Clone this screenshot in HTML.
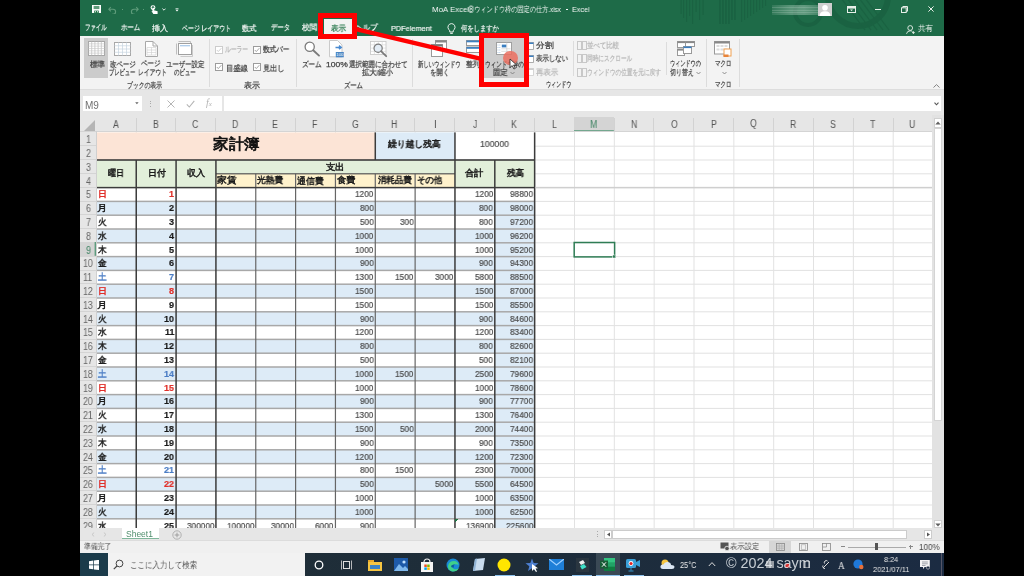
<!DOCTYPE html><html><head><meta charset="utf-8"><style>
html,body{margin:0;padding:0;background:#000;width:1024px;height:576px;overflow:hidden}
body{position:relative;font-family:"Liberation Sans",sans-serif}
div{position:absolute;box-sizing:border-box}
.t{white-space:nowrap;will-change:transform}
</style></head><body>
<div style="left:80.00px;top:0.00px;width:864.00px;height:553.00px;background:#e6e6e6"></div>
<div style="left:80.00px;top:0.00px;width:864.00px;height:36.40px;background:#1e6b48"></div>
<svg style="position:absolute;left:670px;top:0px" width="274" height="36" viewBox="0 0 274 36"><g opacity="0.8"><rect x="10.5" y="0" width="1.1" height="14" fill="#1a6141"/><rect x="13.0" y="0" width="1.1" height="18" fill="#1a6141"/><rect x="16.0" y="0" width="1.1" height="22" fill="#1a6141"/><rect x="19.0" y="0" width="1.1" height="16" fill="#1a6141"/><rect x="22.0" y="0" width="1.1" height="24" fill="#1a6141"/><rect x="25.5" y="0" width="1.1" height="12" fill="#1a6141"/><rect x="29.0" y="0" width="1.1" height="20" fill="#1a6141"/><rect x="32.5" y="0" width="1.1" height="15" fill="#1a6141"/><rect x="49.0" y="0" width="1.8" height="24" fill="#1a6141"/><rect x="52.0" y="0" width="1.8" height="24" fill="#1a6141"/><rect x="55.0" y="0" width="1.8" height="24" fill="#1a6141"/><rect x="58.0" y="0" width="1.8" height="24" fill="#1a6141"/><rect x="61.0" y="0" width="1.8" height="20" fill="#1a6141"/><rect x="64.0" y="0" width="1.8" height="20" fill="#1a6141"/><rect x="71.0" y="0" width="1.1" height="22" fill="#1a6141"/><rect x="74.0" y="0" width="1.1" height="20" fill="#1a6141"/><rect x="77.0" y="0" width="1.1" height="18" fill="#1a6141"/><rect x="80.0" y="0" width="1.1" height="16" fill="#1a6141"/><rect x="83.0" y="0" width="1.1" height="14" fill="#1a6141"/><rect x="86.0" y="0" width="1.1" height="12" fill="#1a6141"/><rect x="89.0" y="0" width="1.1" height="10" fill="#1a6141"/><rect x="92.0" y="0" width="1.1" height="8" fill="#1a6141"/><rect x="95.0" y="0" width="1.1" height="6" fill="#1a6141"/><circle cx="138" cy="12" r="13" fill="none" stroke="#1a6141" stroke-width="4"/><circle cx="188" cy="-4" r="30" fill="none" stroke="#1a6141" stroke-width="6"/><path d="M165 -10 L195 30" stroke="#1a6141" stroke-width="1.2"/><path d="M171 -10 L201 30" stroke="#1a6141" stroke-width="1.2"/><path d="M177 -10 L207 30" stroke="#1a6141" stroke-width="1.2"/><path d="M183 -10 L213 30" stroke="#1a6141" stroke-width="1.2"/><path d="M189 -10 L219 30" stroke="#1a6141" stroke-width="1.2"/></g></svg>
<svg style="position:absolute;left:91.50px;top:5.20px;" width="9" height="8.2" viewBox="0 0 9 8.2"><rect x="0" y="0" width="9" height="8.2" fill="#fff"/><rect x="1.6" y="0.9" width="5.8" height="3.2" fill="#5f9c7b"/><rect x="2.2" y="5.6" width="4.6" height="2.6" fill="#217346"/><rect x="3" y="6.3" width="1" height="1" fill="#fff"/><rect x="5" y="6.3" width="1" height="1" fill="#fff"/></svg>
<svg style="position:absolute;left:108.00px;top:5.50px;" width="9" height="8" viewBox="0 0 9 8"><path d="M2.8 1 L0.8 3.2 L2.8 5.4 M1.2 3.2 H5 A2.6 2.6 0 0 1 5 8.4 H4" fill="none" stroke="#5f9c7b" stroke-width="1.1"/></svg>
<svg style="position:absolute;left:129.80px;top:5.50px;" width="9" height="8" viewBox="0 0 9 8"><path d="M6.2 1 L8.2 3.2 L6.2 5.4 M7.8 3.2 H4 A2.6 2.6 0 0 0 4 8.4 H5" fill="none" stroke="#5f9c7b" stroke-width="1.1"/></svg>
<div style="left:121.50px;top:9.30px;width:1.20px;height:0.90px;background:#5f9c7b"></div>
<div style="left:143.20px;top:9.30px;width:1.20px;height:0.90px;background:#5f9c7b"></div>
<svg style="position:absolute;left:150.30px;top:4.80px;" width="8" height="9.5" viewBox="0 0 8 9.5"><circle cx="3" cy="2.6" r="1.9" fill="none" stroke="#fff" stroke-width="1.1"/><path d="M2.4 2.8 V6.2 L1.4 6 L3.6 9.4 H7.6 V6.3 L4 5.2 V2.8Z" fill="#fff"/></svg>
<svg style="position:absolute;left:162.30px;top:8.20px;" width="4" height="3" viewBox="0 0 4 3"><path d="M0.4 0.6 L2 2.2 L3.6 0.6" fill="none" stroke="#fff" stroke-width="0.9"/></svg>
<svg style="position:absolute;left:175.00px;top:7.80px;" width="4" height="4" viewBox="0 0 4 4"><rect x="0.5" y="0.4" width="3" height="0.8" fill="#fff"/><path d="M0.5 1.8 L2 3.6 L3.5 1.8Z" fill="#fff"/></svg>
<div class="t" style="left:431.71px;top:4.30px;font-size:8px;line-height:11px;color:#f4f7f5;font-weight:normal;font-family:'Liberation Sans',sans-serif;transform-origin:0 0;transform:scaleX(0.9853);">MoA Excel</div>
<div class="t" style="left:467.83px;top:4.30px;font-size:8px;line-height:11px;color:#f4f7f5;font-weight:normal;font-family:'Liberation Sans',sans-serif;transform-origin:0 0;transform:scaleX(0.7723);">⑧ウィンドウ枠の固定の仕方.xlsx</div>
<div style="left:566.00px;top:9.20px;width:2.40px;height:0.80px;background:#f4f7f5"></div>
<div class="t" style="left:572.39px;top:4.30px;font-size:8px;line-height:11px;color:#f4f7f5;font-weight:normal;font-family:'Liberation Sans',sans-serif;transform-origin:0 0;transform:scaleX(0.9111);">Excel</div>
<div style="left:772px;top:5px;width:46px;height:9.5px;background:linear-gradient(90deg,rgba(190,215,200,.12),rgba(200,225,210,.35) 40%,rgba(200,225,210,.4) 70%,rgba(190,215,200,.25));"></div>
<div style="left:772.00px;top:7.00px;width:46.00px;height:0.90px;background:rgba(230,240,235,.18)"></div>
<div style="left:772.00px;top:9.50px;width:46.00px;height:0.90px;background:rgba(230,240,235,.18)"></div>
<div style="left:772.00px;top:12.00px;width:46.00px;height:0.90px;background:rgba(230,240,235,.18)"></div>
<div style="left:818.00px;top:2.50px;width:13.50px;height:13.00px;background:#cfcfcf"></div>
<svg style="position:absolute;left:818.00px;top:2.50px;" width="14" height="13" viewBox="0 0 14 13"><circle cx="7" cy="4.8" r="2.8" fill="#fff"/><path d="M1.5 13 Q1.5 8.2 7 8.2 Q12.5 8.2 12.5 13Z" fill="#fff"/></svg>
<svg style="position:absolute;left:846.50px;top:5.60px;" width="9" height="7" viewBox="0 0 9 7"><rect x="0.5" y="0.5" width="8" height="6" fill="none" stroke="#e8efe9" stroke-width="1"/><rect x="1" y="1" width="7" height="1.6" fill="#e8efe9"/><path d="M3 3.6 L4.5 5.2 L6 3.6Z" fill="#e8efe9"/></svg>
<div style="left:875.00px;top:8.80px;width:6.00px;height:1.00px;background:#e8efe9"></div>
<svg style="position:absolute;left:900.80px;top:5.80px;" width="7" height="7" viewBox="0 0 7 7"><rect x="0.5" y="1.8" width="4.7" height="4.7" fill="none" stroke="#e8efe9" stroke-width="1"/><path d="M1.8 1.8 V0.5 H6.5 V5.2 H5.2" fill="none" stroke="#e8efe9" stroke-width="1"/></svg>
<svg style="position:absolute;left:927.60px;top:6.40px;" width="6" height="6" viewBox="0 0 6 6"><path d="M0.4 0.4 L5.6 5.6 M5.6 0.4 L0.4 5.6" stroke="#e8efe9" stroke-width="1"/></svg>
<div style="left:323.75px;top:19.40px;width:28.20px;height:17.10px;background:#f3f3f3"></div>
<div class="t" style="left:84.97px;top:22.30px;font-size:8px;line-height:11px;color:#f4f7f5;font-weight:normal;font-family:'Liberation Sans',sans-serif;transform-origin:0 0;transform:scaleX(0.6759);-webkit-text-stroke:0.2px #f4f7f5;">ファイル</div>
<div class="t" style="left:120.60px;top:22.30px;font-size:8px;line-height:11px;color:#f4f7f5;font-weight:normal;font-family:'Liberation Sans',sans-serif;transform-origin:0 0;transform:scaleX(0.8000);-webkit-text-stroke:0.2px #f4f7f5;">ホーム</div>
<div class="t" style="left:152.39px;top:22.80px;font-size:8px;line-height:11px;color:#f4f7f5;font-weight:normal;font-family:'Liberation Sans',sans-serif;transform-origin:0 0;transform:scaleX(1.0071);-webkit-text-stroke:0.2px #f4f7f5;">挿入</div>
<div class="t" style="left:181.56px;top:22.80px;font-size:8px;line-height:11px;color:#f4f7f5;font-weight:normal;font-family:'Liberation Sans',sans-serif;transform-origin:0 0;transform:scaleX(0.7443);-webkit-text-stroke:0.2px #f4f7f5;">ページ レイアウト</div>
<div class="t" style="left:241.90px;top:22.80px;font-size:8px;line-height:11px;color:#f4f7f5;font-weight:normal;font-family:'Liberation Sans',sans-serif;transform-origin:0 0;transform:scaleX(0.9000);-webkit-text-stroke:0.2px #f4f7f5;">数式</div>
<div class="t" style="left:270.60px;top:22.30px;font-size:8px;line-height:11px;color:#f4f7f5;font-weight:normal;font-family:'Liberation Sans',sans-serif;transform-origin:0 0;transform:scaleX(0.7952);-webkit-text-stroke:0.2px #f4f7f5;">データ</div>
<div class="t" style="left:301.75px;top:22.30px;font-size:8px;line-height:11px;color:#f4f7f5;font-weight:normal;font-family:'Liberation Sans',sans-serif;transform-origin:0 0;transform:scaleX(0.9500);-webkit-text-stroke:0.2px #f4f7f5;">校閲</div>
<div class="t" style="left:355.10px;top:22.30px;font-size:8px;line-height:11px;color:#f4f7f5;font-weight:normal;font-family:'Liberation Sans',sans-serif;transform-origin:0 0;transform:scaleX(0.9476);-webkit-text-stroke:0.2px #f4f7f5;">ヘルプ</div>
<div class="t" style="left:390.78px;top:22.80px;font-size:8px;line-height:11px;color:#f4f7f5;font-weight:normal;font-family:'Liberation Sans',sans-serif;transform-origin:0 0;transform:scaleX(0.9163);-webkit-text-stroke:0.2px #f4f7f5;">PDFelement</div>
<div class="t" style="left:461.21px;top:22.80px;font-size:8px;line-height:11px;color:#f4f7f5;font-weight:normal;font-family:'Liberation Sans',sans-serif;transform-origin:0 0;transform:scaleX(0.7886);-webkit-text-stroke:0.2px #f4f7f5;">何をしますか</div>
<div class="t" style="left:330.66px;top:22.80px;font-size:8px;line-height:11px;color:#217346;font-weight:normal;font-family:'Liberation Sans',sans-serif;transform-origin:0 0;transform:scaleX(0.9429);-webkit-text-stroke:0.2px #217346;">表示</div>
<svg style="position:absolute;left:447.00px;top:22.50px;" width="9" height="11" viewBox="0 0 9 11"><path d="M4.5 0.6 A3.6 3.6 0 0 1 7.2 6.5 L6.2 7.8 V9 H2.8 V7.8 L1.8 6.5 A3.6 3.6 0 0 1 4.5 0.6Z M3.2 10.4 H5.8" fill="none" stroke="#fff" stroke-width="0.9"/></svg>
<svg style="position:absolute;left:906.30px;top:25.00px;" width="9" height="9" viewBox="0 0 9 9"><circle cx="4.2" cy="3" r="2.4" fill="none" stroke="#e8efe9" stroke-width="0.9"/><path d="M0.5 8.8 Q1.2 5.8 4.2 5.8 Q5.6 5.8 6.4 6.5 M6 7.6 H8.8 M7.4 6.2 V9" fill="none" stroke="#e8efe9" stroke-width="0.9"/></svg>
<div class="t" style="left:918.07px;top:22.80px;font-size:8px;line-height:11px;color:#f4f7f5;font-weight:normal;font-family:'Liberation Sans',sans-serif;transform-origin:0 0;transform:scaleX(0.9286);">共有</div>
<div style="left:80.00px;top:36.40px;width:864.00px;height:52.80px;background:#f3f3f3"></div>
<div style="left:80.00px;top:88.80px;width:864.00px;height:1.00px;background:#dddddd"></div>
<div style="left:208.70px;top:39.00px;width:1.00px;height:48.00px;background:#dcdcdc"></div>
<div style="left:296.00px;top:39.00px;width:1.00px;height:48.00px;background:#dcdcdc"></div>
<div style="left:411.50px;top:39.00px;width:1.00px;height:48.00px;background:#dcdcdc"></div>
<div style="left:705.90px;top:39.00px;width:1.00px;height:48.00px;background:#dcdcdc"></div>
<div style="left:738.80px;top:39.00px;width:1.00px;height:48.00px;background:#dcdcdc"></div>
<div style="left:572.50px;top:41.00px;width:1.00px;height:35.00px;background:#dcdcdc"></div>
<div style="left:666.10px;top:42.00px;width:1.00px;height:33.00px;background:#dcdcdc"></div>
<div class="t" style="left:126.87px;top:79.50px;font-size:7.6px;line-height:11px;color:#444444;font-weight:normal;font-family:'Liberation Sans',sans-serif;transform-origin:0 0;transform:scaleX(0.7304);-webkit-text-stroke:0.25px #444444;">ブックの表示</div>
<div class="t" style="left:244.31px;top:79.50px;font-size:7.6px;line-height:11px;color:#444444;font-weight:normal;font-family:'Liberation Sans',sans-serif;transform-origin:0 0;transform:scaleX(0.9929);-webkit-text-stroke:0.25px #444444;">表示</div>
<div class="t" style="left:344.23px;top:79.50px;font-size:7.6px;line-height:11px;color:#444444;font-weight:normal;font-family:'Liberation Sans',sans-serif;transform-origin:0 0;transform:scaleX(0.7857);-webkit-text-stroke:0.25px #444444;">ズーム</div>
<div class="t" style="left:546.37px;top:79.00px;font-size:7.6px;line-height:11px;color:#444444;font-weight:normal;font-family:'Liberation Sans',sans-serif;transform-origin:0 0;transform:scaleX(0.6316);-webkit-text-stroke:0.25px #444444;">ウィンドウ</div>
<div class="t" style="left:714.82px;top:79.00px;font-size:7.6px;line-height:11px;color:#444444;font-weight:normal;font-family:'Liberation Sans',sans-serif;transform-origin:0 0;transform:scaleX(0.6818);-webkit-text-stroke:0.25px #444444;">マクロ</div>
<div style="left:84.40px;top:38.30px;width:23.50px;height:39.60px;background:#cccccc"></div>
<svg style="position:absolute;left:88.00px;top:41.40px;" width="17" height="15" viewBox="0 0 17 15"><rect x="0.5" y="0.5" width="16" height="14" fill="#fff" stroke="#a8a8a8"/><line x1="3.70" y1="0.5" x2="3.70" y2="14.5" stroke="#b8b8b8" stroke-width="0.7"/><line x1="6.90" y1="0.5" x2="6.90" y2="14.5" stroke="#b8b8b8" stroke-width="0.7"/><line x1="10.10" y1="0.5" x2="10.10" y2="14.5" stroke="#b8b8b8" stroke-width="0.7"/><line x1="13.30" y1="0.5" x2="13.30" y2="14.5" stroke="#b8b8b8" stroke-width="0.7"/><line x1="0.5" y1="2.83" x2="16.5" y2="2.83" stroke="#c8c8c8" stroke-width="0.6"/><line x1="0.5" y1="5.17" x2="16.5" y2="5.17" stroke="#c8c8c8" stroke-width="0.6"/><line x1="0.5" y1="7.50" x2="16.5" y2="7.50" stroke="#c8c8c8" stroke-width="0.6"/><line x1="0.5" y1="9.83" x2="16.5" y2="9.83" stroke="#c8c8c8" stroke-width="0.6"/><line x1="0.5" y1="12.17" x2="16.5" y2="12.17" stroke="#c8c8c8" stroke-width="0.6"/></svg>
<div class="t" style="left:89.50px;top:58.50px;font-size:7.6px;line-height:11px;color:#444444;font-weight:normal;font-family:'Liberation Sans',sans-serif;transform-origin:0 0;transform:scaleX(0.9333);-webkit-text-stroke:0.25px #444444;">標準</div>
<svg style="position:absolute;left:114.00px;top:42.00px;" width="17" height="14" viewBox="0 0 17 14"><rect x="0.5" y="0.5" width="16" height="13" fill="#fff" stroke="#a8a8a8"/><line x1="4.5" y1="0.5" x2="4.5" y2="13.5" stroke="#c6d4e0" stroke-width="0.7"/><line x1="8.5" y1="0.5" x2="8.5" y2="13.5" stroke="#c6d4e0" stroke-width="0.7"/><line x1="12.5" y1="0.5" x2="12.5" y2="13.5" stroke="#c6d4e0" stroke-width="0.7"/><line x1="0.5" y1="3.75" x2="16.5" y2="3.75" stroke="#c6d4e0" stroke-width="0.7"/><line x1="0.5" y1="7.0" x2="16.5" y2="7.0" stroke="#c6d4e0" stroke-width="0.7"/><line x1="0.5" y1="10.25" x2="16.5" y2="10.25" stroke="#c6d4e0" stroke-width="0.7"/></svg>
<div class="t" style="left:109.70px;top:58.50px;font-size:7.6px;line-height:11px;color:#444444;font-weight:normal;font-family:'Liberation Sans',sans-serif;transform-origin:0 0;transform:scaleX(0.8033);-webkit-text-stroke:0.25px #444444;">改ページ</div>
<div class="t" style="left:109.14px;top:66.70px;font-size:7.6px;line-height:11px;color:#444444;font-weight:normal;font-family:'Liberation Sans',sans-serif;transform-origin:0 0;transform:scaleX(0.6579);-webkit-text-stroke:0.25px #444444;">プレビュー</div>
<svg style="position:absolute;left:144.60px;top:40.80px;" width="13" height="16" viewBox="0 0 13 16"><path d="M0.5 0.5 H8 L12.5 5 V15.5 H0.5Z" fill="#fff" stroke="#a8a8a8"/><path d="M8 0.5 V5 H12.5" fill="none" stroke="#a8a8a8"/><path d="M2 6.5 H11 V14 H2Z M6.5 6.5 V14 M2 9 H11 M2 11.5 H11" fill="none" stroke="#cfcfcf" stroke-width="0.6"/></svg>
<div class="t" style="left:141.39px;top:58.00px;font-size:7.6px;line-height:11px;color:#444444;font-weight:normal;font-family:'Liberation Sans',sans-serif;transform-origin:0 0;transform:scaleX(0.8091);-webkit-text-stroke:0.25px #444444;">ページ</div>
<div class="t" style="left:137.87px;top:67.20px;font-size:7.6px;line-height:11px;color:#444444;font-weight:normal;font-family:'Liberation Sans',sans-serif;transform-origin:0 0;transform:scaleX(0.7257);-webkit-text-stroke:0.25px #444444;">レイアウト</div>
<svg style="position:absolute;left:176.30px;top:41.40px;" width="17" height="16" viewBox="0 0 17 16"><path d="M2.5 0.5 H14.5 M0.5 2.5 V13.5 M14.5 0.5 V2" fill="none" stroke="#b0b0b0" stroke-width="0.8"/><rect x="2.5" y="2.5" width="13" height="11" fill="#fff" stroke="#a0a0a0"/><path d="M4.5 15.5 H16.5 V4" fill="none" stroke="#b8b8b8" stroke-width="0.7"/><rect x="4" y="4.2" width="10" height="1.1" fill="#9fc3e6"/></svg>
<div class="t" style="left:165.50px;top:58.50px;font-size:7.6px;line-height:11px;color:#444444;font-weight:normal;font-family:'Liberation Sans',sans-serif;transform-origin:0 0;transform:scaleX(0.8000);-webkit-text-stroke:0.25px #444444;">ユーザー設定</div>
<div class="t" style="left:173.92px;top:66.70px;font-size:7.6px;line-height:11px;color:#444444;font-weight:normal;font-family:'Liberation Sans',sans-serif;transform-origin:0 0;transform:scaleX(0.6767);-webkit-text-stroke:0.25px #444444;">のビュー</div>
<svg style="position:absolute;left:215.30px;top:45.50px;" width="8" height="8" viewBox="0 0 8 8"><rect x="0.5" y="0.5" width="7" height="7" fill="#fff" stroke="#cccccc"/><path d="M1.8 4 L3.3 5.6 L6.3 2.2" fill="none" stroke="#cccccc" stroke-width="0.9"/></svg>
<div class="t" style="left:225.38px;top:44.20px;font-size:7.6px;line-height:11px;color:#b8b8b8;font-weight:normal;font-family:'Liberation Sans',sans-serif;transform-origin:0 0;transform:scaleX(0.7200);-webkit-text-stroke:0.25px #b8b8b8;">ルーラー</div>
<svg style="position:absolute;left:252.80px;top:45.50px;" width="8" height="8" viewBox="0 0 8 8"><rect x="0.5" y="0.5" width="7" height="7" fill="#fff" stroke="#9c9c9c"/><path d="M1.8 4 L3.3 5.6 L6.3 2.2" fill="none" stroke="#9c9c9c" stroke-width="0.9"/></svg>
<div class="t" style="left:262.78px;top:44.20px;font-size:7.6px;line-height:11px;color:#444444;font-weight:normal;font-family:'Liberation Sans',sans-serif;transform-origin:0 0;transform:scaleX(0.8233);-webkit-text-stroke:0.25px #444444;">数式バー</div>
<svg style="position:absolute;left:215.30px;top:63.30px;" width="8" height="8" viewBox="0 0 8 8"><rect x="0.5" y="0.5" width="7" height="7" fill="#fff" stroke="#9c9c9c"/><path d="M1.8 4 L3.3 5.6 L6.3 2.2" fill="none" stroke="#9c9c9c" stroke-width="0.9"/></svg>
<div class="t" style="left:225.69px;top:62.50px;font-size:7.6px;line-height:11px;color:#444444;font-weight:normal;font-family:'Liberation Sans',sans-serif;transform-origin:0 0;transform:scaleX(0.9136);-webkit-text-stroke:0.25px #444444;">目盛線</div>
<svg style="position:absolute;left:252.80px;top:63.30px;" width="8" height="8" viewBox="0 0 8 8"><rect x="0.5" y="0.5" width="7" height="7" fill="#fff" stroke="#9c9c9c"/><path d="M1.8 4 L3.3 5.6 L6.3 2.2" fill="none" stroke="#9c9c9c" stroke-width="0.9"/></svg>
<div class="t" style="left:262.70px;top:62.50px;font-size:7.6px;line-height:11px;color:#444444;font-weight:normal;font-family:'Liberation Sans',sans-serif;transform-origin:0 0;transform:scaleX(0.8952);-webkit-text-stroke:0.25px #444444;">見出し</div>
<svg style="position:absolute;left:304.00px;top:41.00px;" width="17" height="17" viewBox="0 0 17 17"><circle cx="5.7" cy="5.8" r="4.6" fill="#fff" stroke="#7a7a7a" stroke-width="1.3"/><path d="M9.2 9.3 L15 14.6" stroke="#7a7a7a" stroke-width="1.9" stroke-linecap="round"/></svg>
<div class="t" style="left:302.27px;top:58.50px;font-size:7.6px;line-height:11px;color:#444444;font-weight:normal;font-family:'Liberation Sans',sans-serif;transform-origin:0 0;transform:scaleX(0.8143);-webkit-text-stroke:0.25px #444444;">ズーム</div>
<svg style="position:absolute;left:329.30px;top:40.20px;" width="16" height="18" viewBox="0 0 16 18"><path d="M0.5 0.5 H8.5 L13 5 V16.8 H0.5Z" fill="#fff" stroke="#c4c4c4" stroke-width="0.9"/><path d="M6.5 7.4 H11.5 M10 5.6 L12.2 7.4 L10 9.2" fill="none" stroke="#4a8ad0" stroke-width="1.5"/><rect x="6.8" y="12" width="8" height="5.3" fill="#4a86c4"/><text x="10.8" y="16.3" font-size="4.2" fill="#fff" text-anchor="middle" font-family="Liberation Sans">100</text></svg>
<div class="t" style="left:325.58px;top:58.50px;font-size:7.6px;line-height:11px;color:#444444;font-weight:normal;font-family:'Liberation Sans',sans-serif;transform-origin:0 0;transform:scaleX(1.1235);-webkit-text-stroke:0.25px #444444;">100%</div>
<svg style="position:absolute;left:369.80px;top:41.00px;" width="18" height="17" viewBox="0 0 18 17"><rect x="0.5" y="0.5" width="15.5" height="13" fill="#fff" stroke="#c4c4c4" stroke-width="0.8"/><line x1="4.4" y1="0.5" x2="4.4" y2="13.5" stroke="#d4d4d4" stroke-width="0.6"/><line x1="8.3" y1="0.5" x2="8.3" y2="13.5" stroke="#d4d4d4" stroke-width="0.6"/><line x1="12.2" y1="0.5" x2="12.2" y2="13.5" stroke="#d4d4d4" stroke-width="0.6"/><line x1="0.5" y1="3.8" x2="16" y2="3.8" stroke="#d4d4d4" stroke-width="0.6"/><line x1="0.5" y1="7.1" x2="16" y2="7.1" stroke="#d4d4d4" stroke-width="0.6"/><line x1="0.5" y1="10.4" x2="16" y2="10.4" stroke="#d4d4d4" stroke-width="0.6"/><circle cx="8.1" cy="7.2" r="4.1" fill="#e3ecf5" stroke="#7a7a7a" stroke-width="1.2"/><path d="M11 10.2 L16.2 15.2" stroke="#7a7a7a" stroke-width="1.8" stroke-linecap="round"/></svg>
<div class="t" style="left:348.99px;top:59.00px;font-size:7.6px;line-height:11px;color:#444444;font-weight:normal;font-family:'Liberation Sans',sans-serif;transform-origin:0 0;transform:scaleX(0.8145);-webkit-text-stroke:0.25px #444444;">選択範囲に合わせて</div>
<div class="t" style="left:361.99px;top:67.20px;font-size:7.6px;line-height:11px;color:#444444;font-weight:normal;font-family:'Liberation Sans',sans-serif;transform-origin:0 0;transform:scaleX(0.9121);-webkit-text-stroke:0.25px #444444;">拡大/縮小</div>
<svg style="position:absolute;left:430.50px;top:40.40px;" width="16" height="17" viewBox="0 0 16 17"><rect x="4.5" y="0.5" width="11" height="10" fill="#fff" stroke="#999"/><rect x="4.5" y="0.5" width="11" height="2" fill="#888"/><rect x="0.5" y="4.5" width="11" height="12" fill="#fff" stroke="#999"/><rect x="0.5" y="4.5" width="11" height="2" fill="#777"/></svg>
<div class="t" style="left:417.83px;top:58.50px;font-size:7.6px;line-height:11px;color:#444444;font-weight:normal;font-family:'Liberation Sans',sans-serif;transform-origin:0 0;transform:scaleX(0.6661);-webkit-text-stroke:0.25px #444444;">新しいウィンドウ</div>
<div class="t" style="left:429.58px;top:67.20px;font-size:7.6px;line-height:11px;color:#444444;font-weight:normal;font-family:'Liberation Sans',sans-serif;transform-origin:0 0;transform:scaleX(0.8105);-webkit-text-stroke:0.25px #444444;">を開く</div>
<svg style="position:absolute;left:466.40px;top:40.40px;" width="14" height="13" viewBox="0 0 14 13"><rect x="0.5" y="0.5" width="13" height="5" fill="#fff" stroke="#999"/><rect x="0.5" y="0.5" width="13" height="1.8" fill="#3c7fc0"/><rect x="0.5" y="7" width="13" height="5.5" fill="#fff" stroke="#999"/><rect x="0.5" y="7" width="13" height="1.8" fill="#3c7fc0"/></svg>
<div class="t" style="left:465.54px;top:58.50px;font-size:7.6px;line-height:11px;color:#444444;font-weight:normal;font-family:'Liberation Sans',sans-serif;transform-origin:0 0;transform:scaleX(0.8643);-webkit-text-stroke:0.25px #444444;">整列</div>
<div style="left:484.00px;top:37.50px;width:40.00px;height:40.30px;background:#cccccc"></div>
<svg style="position:absolute;left:496.40px;top:41.90px;" width="16" height="13" viewBox="0 0 16 13"><rect x="0.5" y="0.5" width="15" height="12" fill="#fff" stroke="#a0a0a0"/><rect x="5.8" y="2.6" width="4.6" height="2.8" fill="#3c7fc0"/><path d="M1.5 3 H4.5 M1.5 5.5 H4.5 M1.5 8 H4.5 M1.5 10.5 H4.5" stroke="#9fbfdf" stroke-width="0.8" stroke-dasharray="1 0.8"/><path d="M5.3 6.8 H14.5 M5.3 9.3 H14.5 M10.8 0.5 V12.5" stroke="#c8c8c8" stroke-width="0.6"/></svg>
<div class="t" style="left:484.71px;top:58.50px;font-size:7.6px;line-height:11px;color:#444444;font-weight:normal;font-family:'Liberation Sans',sans-serif;transform-origin:0 0;transform:scaleX(0.6926);-webkit-text-stroke:0.25px #444444;">ウィンドウ枠の</div>
<div class="t" style="left:493.29px;top:67.20px;font-size:7.6px;line-height:11px;color:#444444;font-weight:normal;font-family:'Liberation Sans',sans-serif;transform-origin:0 0;transform:scaleX(0.9143);-webkit-text-stroke:0.25px #444444;">固定</div>
<svg style="position:absolute;left:510.00px;top:71.00px;" width="5" height="4" viewBox="0 0 5 4"><path d="M0.5 1 L2.5 3 L4.5 1" fill="none" stroke="#777" stroke-width="0.8"/></svg>
<svg style="position:absolute;left:527.00px;top:41.60px;" width="7" height="8" viewBox="0 0 7 8"><rect x="0.5" y="0.5" width="6" height="7" fill="#fff" stroke="#999" stroke-width="0.8"/><rect x="0.5" y="0.5" width="6" height="1.5" fill="#3c7fc0"/></svg>
<div class="t" style="left:535.60px;top:40.10px;font-size:7.6px;line-height:11px;color:#444444;font-weight:normal;font-family:'Liberation Sans',sans-serif;transform-origin:0 0;transform:scaleX(1.1000);-webkit-text-stroke:0.25px #444444;">分割</div>
<svg style="position:absolute;left:527.00px;top:54.80px;" width="7" height="8" viewBox="0 0 7 8"><rect x="0.5" y="0.5" width="6" height="7" fill="#fff" stroke="#999" stroke-width="0.8"/><rect x="0.5" y="0.5" width="6" height="1.5" fill="#3c7fc0"/></svg>
<div class="t" style="left:535.90px;top:53.20px;font-size:7.6px;line-height:11px;color:#444444;font-weight:normal;font-family:'Liberation Sans',sans-serif;transform-origin:0 0;transform:scaleX(0.8026);-webkit-text-stroke:0.25px #444444;">表示しない</div>
<svg style="position:absolute;left:527.00px;top:68.00px;" width="7" height="8" viewBox="0 0 7 8"><rect x="0.5" y="0.5" width="6" height="7" fill="#fff" stroke="#cccccc" stroke-width="0.8"/><rect x="0.5" y="0.5" width="6" height="1.5" fill="#ccc"/></svg>
<div class="t" style="left:536.08px;top:66.50px;font-size:7.6px;line-height:11px;color:#b8b8b8;font-weight:normal;font-family:'Liberation Sans',sans-serif;transform-origin:0 0;transform:scaleX(0.9227);-webkit-text-stroke:0.25px #b8b8b8;">再表示</div>
<svg style="position:absolute;left:576.50px;top:41.10px;" width="10" height="9" viewBox="0 0 10 9"><rect x="0.5" y="0.5" width="4" height="8" fill="none" stroke="#c8c8c8"/><rect x="5.5" y="0.5" width="4" height="8" fill="none" stroke="#c8c8c8"/></svg>
<div class="t" style="left:587.20px;top:40.10px;font-size:7.6px;line-height:11px;color:#b8b8b8;font-weight:normal;font-family:'Liberation Sans',sans-serif;transform-origin:0 0;transform:scaleX(0.8026);-webkit-text-stroke:0.25px #b8b8b8;">並べて比較</div>
<svg style="position:absolute;left:576.50px;top:54.20px;" width="10" height="9" viewBox="0 0 10 9"><rect x="0.5" y="0.5" width="4" height="8" fill="none" stroke="#c8c8c8"/><rect x="5.5" y="0.5" width="4" height="8" fill="none" stroke="#c8c8c8"/></svg>
<div class="t" style="left:587.29px;top:53.20px;font-size:7.6px;line-height:11px;color:#b8b8b8;font-weight:normal;font-family:'Liberation Sans',sans-serif;transform-origin:0 0;transform:scaleX(0.7063);-webkit-text-stroke:0.25px #b8b8b8;">同時にスクロール</div>
<svg style="position:absolute;left:576.50px;top:67.50px;" width="10" height="9" viewBox="0 0 10 9"><rect x="0.5" y="0.5" width="4" height="8" fill="none" stroke="#c8c8c8"/><rect x="5.5" y="0.5" width="4" height="8" fill="none" stroke="#c8c8c8"/></svg>
<div class="t" style="left:587.29px;top:66.50px;font-size:7.6px;line-height:11px;color:#b8b8b8;font-weight:normal;font-family:'Liberation Sans',sans-serif;transform-origin:0 0;transform:scaleX(0.7108);-webkit-text-stroke:0.25px #b8b8b8;">ウィンドウの位置を元に戻す</div>
<svg style="position:absolute;left:676.60px;top:41.00px;" width="18" height="15" viewBox="0 0 18 15"><rect x="0.5" y="0.5" width="8" height="6" fill="#fff" stroke="#999"/><rect x="0.5" y="0.5" width="8" height="1.6" fill="#888"/><rect x="8.5" y="0.5" width="9" height="5" fill="#fff" stroke="#999"/><rect x="8.5" y="0.5" width="9" height="1.6" fill="#888"/><rect x="0.5" y="8" width="7" height="6.5" fill="#fff" stroke="#999"/><rect x="0.5" y="8" width="7" height="1.6" fill="#888"/><rect x="6.5" y="5.5" width="8" height="7" fill="#fff" stroke="#999"/><rect x="6.5" y="5.5" width="8" height="1.6" fill="#3c7fc0"/></svg>
<div class="t" style="left:669.86px;top:58.00px;font-size:7.6px;line-height:11px;color:#444444;font-weight:normal;font-family:'Liberation Sans',sans-serif;transform-origin:0 0;transform:scaleX(0.6413);-webkit-text-stroke:0.25px #444444;">ウィンドウの</div>
<div class="t" style="left:669.76px;top:67.20px;font-size:7.6px;line-height:11px;color:#444444;font-weight:normal;font-family:'Liberation Sans',sans-serif;transform-origin:0 0;transform:scaleX(0.7414);-webkit-text-stroke:0.25px #444444;">切り替え</div>
<svg style="position:absolute;left:696.00px;top:71.00px;" width="5" height="4" viewBox="0 0 5 4"><path d="M0.5 1 L2.5 3 L4.5 1" fill="none" stroke="#777" stroke-width="0.8"/></svg>
<svg style="position:absolute;left:714.00px;top:41.00px;" width="18" height="16" viewBox="0 0 18 16"><rect x="0.5" y="0.5" width="15" height="12.5" fill="#fff" stroke="#999"/><rect x="0.5" y="0.5" width="15" height="2" fill="#888"/><rect x="2.5" y="4" width="3" height="2" fill="#ddd"/><rect x="6.5" y="4" width="3" height="2" fill="#ddd"/><rect x="10.5" y="4" width="3" height="2" fill="#ddd"/><rect x="2.5" y="7.5" width="3" height="2" fill="#ddd"/><rect x="6.5" y="7.5" width="3" height="2" fill="#ddd"/><rect x="10.5" y="7.5" width="3" height="2" fill="#ddd"/><rect x="10" y="8" width="7" height="7" fill="#fff" stroke="#f0a050"/><rect x="9.5" y="13.5" width="5" height="2.5" fill="#e8843a"/></svg>
<div class="t" style="left:714.82px;top:58.00px;font-size:7.6px;line-height:11px;color:#444444;font-weight:normal;font-family:'Liberation Sans',sans-serif;transform-origin:0 0;transform:scaleX(0.6818);-webkit-text-stroke:0.25px #444444;">マクロ</div>
<svg style="position:absolute;left:721.50px;top:71.00px;" width="5" height="4" viewBox="0 0 5 4"><path d="M0.5 1 L2.5 3 L4.5 1" fill="none" stroke="#777" stroke-width="0.8"/></svg>
<svg style="position:absolute;left:933.30px;top:83.80px;" width="7" height="4" viewBox="0 0 7 4"><path d="M0.5 3.5 L3.5 0.6 L6.5 3.5" fill="none" stroke="#777" stroke-width="0.9"/></svg>
<div style="left:80.00px;top:89.80px;width:864.00px;height:25.40px;background:#e6e6e6"></div>
<div style="left:83.00px;top:95.80px;width:58.50px;height:15.20px;background:#fff"></div>
<div class="t" style="left:84.93px;top:98.50px;font-size:10px;line-height:14px;color:#707070;font-weight:normal;font-family:'Liberation Sans',sans-serif;transform-origin:0 0;transform:scaleX(0.9750);">M9</div>
<svg style="position:absolute;left:135.30px;top:102.30px;" width="4" height="3" viewBox="0 0 4 3"><path d="M0.2 0.3 L1.9 2.2 L3.6 0.3Z" fill="#666"/></svg>
<div style="left:149.50px;top:100.50px;width:1.20px;height:1.20px;background:#aaa"></div>
<div style="left:149.50px;top:103.20px;width:1.20px;height:1.20px;background:#aaa"></div>
<div style="left:149.50px;top:105.90px;width:1.20px;height:1.20px;background:#aaa"></div>
<div style="left:159.70px;top:95.80px;width:61.90px;height:15.20px;background:#fff"></div>
<svg style="position:absolute;left:167.00px;top:99.50px;" width="8" height="8" viewBox="0 0 8 8"><path d="M0.5 0.5 L7.5 7.5 M7.5 0.5 L0.5 7.5" stroke="#b5b5b5" stroke-width="1"/></svg>
<svg style="position:absolute;left:186.00px;top:99.50px;" width="9" height="8" viewBox="0 0 9 8"><path d="M0.8 4.3 L3.3 7 L8.3 0.8" fill="none" stroke="#b5b5b5" stroke-width="1.1"/></svg>
<div class="t" style="left:206px;top:97px;color:#b5b5b5;font-size:10px;line-height:12px;font-family:'Liberation Serif',serif"><i>f</i><span style="font-size:7px"><i>x</i></span></div>
<div style="left:224.00px;top:96.00px;width:717.40px;height:14.60px;background:#fff"></div>
<svg style="position:absolute;left:933.80px;top:102.20px;" width="5" height="4" viewBox="0 0 5 4"><path d="M0.5 0.6 L2.5 2.8 L4.5 0.6" fill="none" stroke="#555" stroke-width="1.1"/></svg>
<div style="left:80.00px;top:115.00px;width:852.50px;height:16.30px;background:#e6e6e6"></div>
<div style="left:80.00px;top:131.30px;width:16.50px;height:396.70px;background:#e6e6e6"></div>
<svg style="position:absolute;left:84.00px;top:119.50px;" width="12" height="11" viewBox="0 0 12 11"><path d="M11 0 V11 H0Z" fill="#b5b5b5"/></svg>
<div class="t" style="left:113.04px;top:117.60px;font-size:10px;line-height:14px;color:#555;font-weight:normal;font-family:'Liberation Sans',sans-serif;transform-origin:0 0;transform:scaleX(0.8800);">A</div>
<div style="left:135.54px;top:117.50px;width:1.00px;height:13.50px;background:#d2d2d2"></div>
<div class="t" style="left:152.88px;top:117.60px;font-size:10px;line-height:14px;color:#555;font-weight:normal;font-family:'Liberation Sans',sans-serif;transform-origin:0 0;transform:scaleX(0.8800);">B</div>
<div style="left:175.38px;top:117.50px;width:1.00px;height:13.50px;background:#d2d2d2"></div>
<div class="t" style="left:192.28px;top:117.60px;font-size:10px;line-height:14px;color:#555;font-weight:normal;font-family:'Liberation Sans',sans-serif;transform-origin:0 0;transform:scaleX(0.8800);">C</div>
<div style="left:215.22px;top:117.50px;width:1.00px;height:13.50px;background:#d2d2d2"></div>
<div class="t" style="left:232.12px;top:117.60px;font-size:10px;line-height:14px;color:#555;font-weight:normal;font-family:'Liberation Sans',sans-serif;transform-origin:0 0;transform:scaleX(0.8800);">D</div>
<div style="left:255.06px;top:117.50px;width:1.00px;height:13.50px;background:#d2d2d2"></div>
<div class="t" style="left:272.40px;top:117.60px;font-size:10px;line-height:14px;color:#555;font-weight:normal;font-family:'Liberation Sans',sans-serif;transform-origin:0 0;transform:scaleX(0.8800);">E</div>
<div style="left:294.90px;top:117.50px;width:1.00px;height:13.50px;background:#d2d2d2"></div>
<div class="t" style="left:312.24px;top:117.60px;font-size:10px;line-height:14px;color:#555;font-weight:normal;font-family:'Liberation Sans',sans-serif;transform-origin:0 0;transform:scaleX(0.8800);">F</div>
<div style="left:334.74px;top:117.50px;width:1.00px;height:13.50px;background:#d2d2d2"></div>
<div class="t" style="left:351.64px;top:117.60px;font-size:10px;line-height:14px;color:#555;font-weight:normal;font-family:'Liberation Sans',sans-serif;transform-origin:0 0;transform:scaleX(0.8800);">G</div>
<div style="left:374.58px;top:117.50px;width:1.00px;height:13.50px;background:#d2d2d2"></div>
<div class="t" style="left:391.48px;top:117.60px;font-size:10px;line-height:14px;color:#555;font-weight:normal;font-family:'Liberation Sans',sans-serif;transform-origin:0 0;transform:scaleX(0.8800);">H</div>
<div style="left:414.42px;top:117.50px;width:1.00px;height:13.50px;background:#d2d2d2"></div>
<div class="t" style="left:433.52px;top:117.60px;font-size:10px;line-height:14px;color:#555;font-weight:normal;font-family:'Liberation Sans',sans-serif;transform-origin:0 0;transform:scaleX(0.8800);">I</div>
<div style="left:454.26px;top:117.50px;width:1.00px;height:13.50px;background:#d2d2d2"></div>
<div class="t" style="left:472.92px;top:117.60px;font-size:10px;line-height:14px;color:#555;font-weight:normal;font-family:'Liberation Sans',sans-serif;transform-origin:0 0;transform:scaleX(0.8800);">J</div>
<div style="left:494.10px;top:117.50px;width:1.00px;height:13.50px;background:#d2d2d2"></div>
<div class="t" style="left:511.44px;top:117.60px;font-size:10px;line-height:14px;color:#555;font-weight:normal;font-family:'Liberation Sans',sans-serif;transform-origin:0 0;transform:scaleX(0.8800);">K</div>
<div style="left:533.94px;top:117.50px;width:1.00px;height:13.50px;background:#d2d2d2"></div>
<div class="t" style="left:551.72px;top:117.60px;font-size:10px;line-height:14px;color:#555;font-weight:normal;font-family:'Liberation Sans',sans-serif;transform-origin:0 0;transform:scaleX(0.8800);">L</div>
<div style="left:573.78px;top:117.50px;width:1.00px;height:13.50px;background:#d2d2d2"></div>
<div style="left:574.28px;top:117.30px;width:39.84px;height:14.00px;background:#d4d4d4"></div>
<svg style="position:absolute;left:574.28px;top:129.8px" width="40" height="2"><rect x="0" y="0.2" width="39.84" height="1.4" fill="#5c9c7e"/></svg>
<div class="t" style="left:590.24px;top:117.60px;font-size:10px;line-height:14px;color:#3f8463;font-weight:normal;font-family:'Liberation Sans',sans-serif;transform-origin:0 0;transform:scaleX(0.8800);">M</div>
<div style="left:613.62px;top:117.50px;width:1.00px;height:13.50px;background:#d2d2d2"></div>
<div class="t" style="left:630.52px;top:117.60px;font-size:10px;line-height:14px;color:#555;font-weight:normal;font-family:'Liberation Sans',sans-serif;transform-origin:0 0;transform:scaleX(0.8800);">N</div>
<div style="left:653.46px;top:117.50px;width:1.00px;height:13.50px;background:#d2d2d2"></div>
<div class="t" style="left:670.80px;top:117.60px;font-size:10px;line-height:14px;color:#555;font-weight:normal;font-family:'Liberation Sans',sans-serif;transform-origin:0 0;transform:scaleX(0.8800);">O</div>
<div style="left:693.30px;top:117.50px;width:1.00px;height:13.50px;background:#d2d2d2"></div>
<div class="t" style="left:710.64px;top:117.60px;font-size:10px;line-height:14px;color:#555;font-weight:normal;font-family:'Liberation Sans',sans-serif;transform-origin:0 0;transform:scaleX(0.8800);">P</div>
<div style="left:733.14px;top:117.50px;width:1.00px;height:13.50px;background:#d2d2d2"></div>
<div class="t" style="left:750.48px;top:116.60px;font-size:10px;line-height:14px;color:#555;font-weight:normal;font-family:'Liberation Sans',sans-serif;transform-origin:0 0;transform:scaleX(0.8800);">Q</div>
<div style="left:772.98px;top:117.50px;width:1.00px;height:13.50px;background:#d2d2d2"></div>
<div class="t" style="left:789.88px;top:117.60px;font-size:10px;line-height:14px;color:#555;font-weight:normal;font-family:'Liberation Sans',sans-serif;transform-origin:0 0;transform:scaleX(0.8800);">R</div>
<div style="left:812.82px;top:117.50px;width:1.00px;height:13.50px;background:#d2d2d2"></div>
<div class="t" style="left:830.16px;top:117.60px;font-size:10px;line-height:14px;color:#555;font-weight:normal;font-family:'Liberation Sans',sans-serif;transform-origin:0 0;transform:scaleX(0.8800);">S</div>
<div style="left:852.66px;top:117.50px;width:1.00px;height:13.50px;background:#d2d2d2"></div>
<div class="t" style="left:870.44px;top:117.60px;font-size:10px;line-height:14px;color:#555;font-weight:normal;font-family:'Liberation Sans',sans-serif;transform-origin:0 0;transform:scaleX(0.8800);">T</div>
<div style="left:892.50px;top:117.50px;width:1.00px;height:13.50px;background:#d2d2d2"></div>
<div class="t" style="left:909.40px;top:117.60px;font-size:10px;line-height:14px;color:#555;font-weight:normal;font-family:'Liberation Sans',sans-serif;transform-origin:0 0;transform:scaleX(0.8800);">U</div>
<div style="left:932.34px;top:117.50px;width:1.00px;height:13.50px;background:#d2d2d2"></div>
<div style="left:80.00px;top:130.60px;width:852.50px;height:1.00px;background:#d4d4d4"></div>
<div style="left:80.00px;top:145.30px;width:16.50px;height:1.00px;background:#d4d4d4"></div>
<div class="t" style="left:85.56px;top:133.20px;font-size:10px;line-height:14px;color:#666;font-weight:normal;font-family:'Liberation Sans',sans-serif;transform-origin:0 0;transform:scaleX(0.8800);">1</div>
<div style="left:80.00px;top:159.10px;width:16.50px;height:1.00px;background:#d4d4d4"></div>
<div class="t" style="left:85.56px;top:147.00px;font-size:10px;line-height:14px;color:#666;font-weight:normal;font-family:'Liberation Sans',sans-serif;transform-origin:0 0;transform:scaleX(0.8800);">2</div>
<div style="left:80.00px;top:172.90px;width:16.50px;height:1.00px;background:#d4d4d4"></div>
<div class="t" style="left:85.56px;top:160.80px;font-size:10px;line-height:14px;color:#666;font-weight:normal;font-family:'Liberation Sans',sans-serif;transform-origin:0 0;transform:scaleX(0.8800);">3</div>
<div style="left:80.00px;top:186.70px;width:16.50px;height:1.00px;background:#d4d4d4"></div>
<div class="t" style="left:86.00px;top:174.60px;font-size:10px;line-height:14px;color:#666;font-weight:normal;font-family:'Liberation Sans',sans-serif;transform-origin:0 0;transform:scaleX(0.8800);">4</div>
<div style="left:80.00px;top:200.50px;width:16.50px;height:1.00px;background:#d4d4d4"></div>
<div class="t" style="left:85.56px;top:188.40px;font-size:10px;line-height:14px;color:#666;font-weight:normal;font-family:'Liberation Sans',sans-serif;transform-origin:0 0;transform:scaleX(0.8800);">5</div>
<div style="left:80.00px;top:214.30px;width:16.50px;height:1.00px;background:#d4d4d4"></div>
<div class="t" style="left:85.56px;top:202.20px;font-size:10px;line-height:14px;color:#666;font-weight:normal;font-family:'Liberation Sans',sans-serif;transform-origin:0 0;transform:scaleX(0.8800);">6</div>
<div style="left:80.00px;top:228.10px;width:16.50px;height:1.00px;background:#d4d4d4"></div>
<div class="t" style="left:85.56px;top:216.00px;font-size:10px;line-height:14px;color:#666;font-weight:normal;font-family:'Liberation Sans',sans-serif;transform-origin:0 0;transform:scaleX(0.8800);">7</div>
<div style="left:80.00px;top:241.90px;width:16.50px;height:1.00px;background:#d4d4d4"></div>
<div class="t" style="left:86.00px;top:229.80px;font-size:10px;line-height:14px;color:#666;font-weight:normal;font-family:'Liberation Sans',sans-serif;transform-origin:0 0;transform:scaleX(0.8800);">8</div>
<div style="left:80.00px;top:242.40px;width:16.50px;height:13.80px;background:#d4d4d4"></div>
<svg style="position:absolute;left:94px;top:242.40px" width="3" height="15"><rect x="0.6" y="0" width="1.4" height="13.80" fill="#5c9c7e"/></svg>
<div style="left:80.00px;top:255.70px;width:16.50px;height:1.00px;background:#d4d4d4"></div>
<div class="t" style="left:85.56px;top:243.60px;font-size:10px;line-height:14px;color:#3f8463;font-weight:normal;font-family:'Liberation Sans',sans-serif;transform-origin:0 0;transform:scaleX(0.8800);">9</div>
<div style="left:80.00px;top:269.50px;width:16.50px;height:1.00px;background:#d4d4d4"></div>
<div class="t" style="left:82.92px;top:257.40px;font-size:10px;line-height:14px;color:#666;font-weight:normal;font-family:'Liberation Sans',sans-serif;transform-origin:0 0;transform:scaleX(0.8800);">10</div>
<div style="left:80.00px;top:283.30px;width:16.50px;height:1.00px;background:#d4d4d4"></div>
<div class="t" style="left:83.36px;top:271.20px;font-size:10px;line-height:14px;color:#666;font-weight:normal;font-family:'Liberation Sans',sans-serif;transform-origin:0 0;transform:scaleX(0.8800);">11</div>
<div style="left:80.00px;top:297.10px;width:16.50px;height:1.00px;background:#d4d4d4"></div>
<div class="t" style="left:82.92px;top:285.00px;font-size:10px;line-height:14px;color:#666;font-weight:normal;font-family:'Liberation Sans',sans-serif;transform-origin:0 0;transform:scaleX(0.8800);">12</div>
<div style="left:80.00px;top:310.90px;width:16.50px;height:1.00px;background:#d4d4d4"></div>
<div class="t" style="left:82.92px;top:298.80px;font-size:10px;line-height:14px;color:#666;font-weight:normal;font-family:'Liberation Sans',sans-serif;transform-origin:0 0;transform:scaleX(0.8800);">13</div>
<div style="left:80.00px;top:324.70px;width:16.50px;height:1.00px;background:#d4d4d4"></div>
<div class="t" style="left:82.92px;top:312.60px;font-size:10px;line-height:14px;color:#666;font-weight:normal;font-family:'Liberation Sans',sans-serif;transform-origin:0 0;transform:scaleX(0.8800);">14</div>
<div style="left:80.00px;top:338.50px;width:16.50px;height:1.00px;background:#d4d4d4"></div>
<div class="t" style="left:82.92px;top:326.40px;font-size:10px;line-height:14px;color:#666;font-weight:normal;font-family:'Liberation Sans',sans-serif;transform-origin:0 0;transform:scaleX(0.8800);">15</div>
<div style="left:80.00px;top:352.30px;width:16.50px;height:1.00px;background:#d4d4d4"></div>
<div class="t" style="left:82.92px;top:340.20px;font-size:10px;line-height:14px;color:#666;font-weight:normal;font-family:'Liberation Sans',sans-serif;transform-origin:0 0;transform:scaleX(0.8800);">16</div>
<div style="left:80.00px;top:366.10px;width:16.50px;height:1.00px;background:#d4d4d4"></div>
<div class="t" style="left:82.92px;top:354.00px;font-size:10px;line-height:14px;color:#666;font-weight:normal;font-family:'Liberation Sans',sans-serif;transform-origin:0 0;transform:scaleX(0.8800);">17</div>
<div style="left:80.00px;top:379.90px;width:16.50px;height:1.00px;background:#d4d4d4"></div>
<div class="t" style="left:82.92px;top:367.80px;font-size:10px;line-height:14px;color:#666;font-weight:normal;font-family:'Liberation Sans',sans-serif;transform-origin:0 0;transform:scaleX(0.8800);">18</div>
<div style="left:80.00px;top:393.70px;width:16.50px;height:1.00px;background:#d4d4d4"></div>
<div class="t" style="left:82.92px;top:381.60px;font-size:10px;line-height:14px;color:#666;font-weight:normal;font-family:'Liberation Sans',sans-serif;transform-origin:0 0;transform:scaleX(0.8800);">19</div>
<div style="left:80.00px;top:407.50px;width:16.50px;height:1.00px;background:#d4d4d4"></div>
<div class="t" style="left:82.92px;top:395.40px;font-size:10px;line-height:14px;color:#666;font-weight:normal;font-family:'Liberation Sans',sans-serif;transform-origin:0 0;transform:scaleX(0.8800);">20</div>
<div style="left:80.00px;top:421.30px;width:16.50px;height:1.00px;background:#d4d4d4"></div>
<div class="t" style="left:82.92px;top:409.20px;font-size:10px;line-height:14px;color:#666;font-weight:normal;font-family:'Liberation Sans',sans-serif;transform-origin:0 0;transform:scaleX(0.8800);">21</div>
<div style="left:80.00px;top:435.10px;width:16.50px;height:1.00px;background:#d4d4d4"></div>
<div class="t" style="left:82.92px;top:423.00px;font-size:10px;line-height:14px;color:#666;font-weight:normal;font-family:'Liberation Sans',sans-serif;transform-origin:0 0;transform:scaleX(0.8800);">22</div>
<div style="left:80.00px;top:448.90px;width:16.50px;height:1.00px;background:#d4d4d4"></div>
<div class="t" style="left:82.92px;top:436.80px;font-size:10px;line-height:14px;color:#666;font-weight:normal;font-family:'Liberation Sans',sans-serif;transform-origin:0 0;transform:scaleX(0.8800);">23</div>
<div style="left:80.00px;top:462.70px;width:16.50px;height:1.00px;background:#d4d4d4"></div>
<div class="t" style="left:82.92px;top:450.60px;font-size:10px;line-height:14px;color:#666;font-weight:normal;font-family:'Liberation Sans',sans-serif;transform-origin:0 0;transform:scaleX(0.8800);">24</div>
<div style="left:80.00px;top:476.50px;width:16.50px;height:1.00px;background:#d4d4d4"></div>
<div class="t" style="left:82.92px;top:464.40px;font-size:10px;line-height:14px;color:#666;font-weight:normal;font-family:'Liberation Sans',sans-serif;transform-origin:0 0;transform:scaleX(0.8800);">25</div>
<div style="left:80.00px;top:490.30px;width:16.50px;height:1.00px;background:#d4d4d4"></div>
<div class="t" style="left:82.92px;top:478.20px;font-size:10px;line-height:14px;color:#666;font-weight:normal;font-family:'Liberation Sans',sans-serif;transform-origin:0 0;transform:scaleX(0.8800);">26</div>
<div style="left:80.00px;top:504.10px;width:16.50px;height:1.00px;background:#d4d4d4"></div>
<div class="t" style="left:82.92px;top:492.00px;font-size:10px;line-height:14px;color:#666;font-weight:normal;font-family:'Liberation Sans',sans-serif;transform-origin:0 0;transform:scaleX(0.8800);">27</div>
<div style="left:80.00px;top:517.90px;width:16.50px;height:1.00px;background:#d4d4d4"></div>
<div class="t" style="left:82.92px;top:505.80px;font-size:10px;line-height:14px;color:#666;font-weight:normal;font-family:'Liberation Sans',sans-serif;transform-origin:0 0;transform:scaleX(0.8800);">28</div>
<div style="left:80.00px;top:531.70px;width:16.50px;height:1.00px;background:#d4d4d4"></div>
<div class="t" style="left:82.92px;top:519.60px;font-size:10px;line-height:14px;color:#666;font-weight:normal;font-family:'Liberation Sans',sans-serif;transform-origin:0 0;transform:scaleX(0.8800);">29</div>
<div style="left:96.00px;top:131.30px;width:0.80px;height:396.70px;background:#d0d0d0"></div>
<div style="left:96.8px;top:131.6px;width:835.7px;height:396.4px;background:#fff;overflow:hidden">
<svg style="position:absolute;left:0;top:0" width="836" height="397" viewBox="0 0 836 397" shape-rendering="geometricPrecision"><g transform="translate(-96.8,-131.6)"><rect x="135.54" y="131.30" width="1.00" height="400.00" fill="#e2e2e2"/><rect x="175.38" y="131.30" width="1.00" height="400.00" fill="#e2e2e2"/><rect x="215.22" y="131.30" width="1.00" height="400.00" fill="#e2e2e2"/><rect x="255.06" y="131.30" width="1.00" height="400.00" fill="#e2e2e2"/><rect x="294.90" y="131.30" width="1.00" height="400.00" fill="#e2e2e2"/><rect x="334.74" y="131.30" width="1.00" height="400.00" fill="#e2e2e2"/><rect x="374.58" y="131.30" width="1.00" height="400.00" fill="#e2e2e2"/><rect x="414.42" y="131.30" width="1.00" height="400.00" fill="#e2e2e2"/><rect x="454.26" y="131.30" width="1.00" height="400.00" fill="#e2e2e2"/><rect x="494.10" y="131.30" width="1.00" height="400.00" fill="#e2e2e2"/><rect x="533.94" y="131.30" width="1.00" height="400.00" fill="#e2e2e2"/><rect x="573.78" y="131.30" width="1.00" height="400.00" fill="#e2e2e2"/><rect x="613.62" y="131.30" width="1.00" height="400.00" fill="#e2e2e2"/><rect x="653.46" y="131.30" width="1.00" height="400.00" fill="#e2e2e2"/><rect x="693.30" y="131.30" width="1.00" height="400.00" fill="#e2e2e2"/><rect x="733.14" y="131.30" width="1.00" height="400.00" fill="#e2e2e2"/><rect x="772.98" y="131.30" width="1.00" height="400.00" fill="#e2e2e2"/><rect x="812.82" y="131.30" width="1.00" height="400.00" fill="#e2e2e2"/><rect x="852.66" y="131.30" width="1.00" height="400.00" fill="#e2e2e2"/><rect x="892.50" y="131.30" width="1.00" height="400.00" fill="#e2e2e2"/><rect x="932.34" y="131.30" width="1.00" height="400.00" fill="#e2e2e2"/><rect x="96.50" y="145.30" width="840.00" height="1.00" fill="#e2e2e2"/><rect x="96.50" y="159.10" width="840.00" height="1.00" fill="#e2e2e2"/><rect x="96.50" y="172.90" width="840.00" height="1.00" fill="#e2e2e2"/><rect x="96.50" y="186.70" width="840.00" height="1.00" fill="#e2e2e2"/><rect x="96.50" y="200.50" width="840.00" height="1.00" fill="#e2e2e2"/><rect x="96.50" y="214.30" width="840.00" height="1.00" fill="#e2e2e2"/><rect x="96.50" y="228.10" width="840.00" height="1.00" fill="#e2e2e2"/><rect x="96.50" y="241.90" width="840.00" height="1.00" fill="#e2e2e2"/><rect x="96.50" y="255.70" width="840.00" height="1.00" fill="#e2e2e2"/><rect x="96.50" y="269.50" width="840.00" height="1.00" fill="#e2e2e2"/><rect x="96.50" y="283.30" width="840.00" height="1.00" fill="#e2e2e2"/><rect x="96.50" y="297.10" width="840.00" height="1.00" fill="#e2e2e2"/><rect x="96.50" y="310.90" width="840.00" height="1.00" fill="#e2e2e2"/><rect x="96.50" y="324.70" width="840.00" height="1.00" fill="#e2e2e2"/><rect x="96.50" y="338.50" width="840.00" height="1.00" fill="#e2e2e2"/><rect x="96.50" y="352.30" width="840.00" height="1.00" fill="#e2e2e2"/><rect x="96.50" y="366.10" width="840.00" height="1.00" fill="#e2e2e2"/><rect x="96.50" y="379.90" width="840.00" height="1.00" fill="#e2e2e2"/><rect x="96.50" y="393.70" width="840.00" height="1.00" fill="#e2e2e2"/><rect x="96.50" y="407.50" width="840.00" height="1.00" fill="#e2e2e2"/><rect x="96.50" y="421.30" width="840.00" height="1.00" fill="#e2e2e2"/><rect x="96.50" y="435.10" width="840.00" height="1.00" fill="#e2e2e2"/><rect x="96.50" y="448.90" width="840.00" height="1.00" fill="#e2e2e2"/><rect x="96.50" y="462.70" width="840.00" height="1.00" fill="#e2e2e2"/><rect x="96.50" y="476.50" width="840.00" height="1.00" fill="#e2e2e2"/><rect x="96.50" y="490.30" width="840.00" height="1.00" fill="#e2e2e2"/><rect x="96.50" y="504.10" width="840.00" height="1.00" fill="#e2e2e2"/><rect x="96.50" y="517.90" width="840.00" height="1.00" fill="#e2e2e2"/><rect x="96.50" y="531.70" width="840.00" height="1.00" fill="#e2e2e2"/><rect x="96.20" y="132.00" width="278.88" height="27.60" fill="#fce4d6"/><rect x="375.08" y="132.00" width="79.68" height="27.60" fill="#ddebf7"/><rect x="454.76" y="132.00" width="79.68" height="27.60" fill="#fff"/><rect x="96.20" y="159.60" width="119.52" height="27.60" fill="#e2efda"/><rect x="215.72" y="159.60" width="239.04" height="13.80" fill="#e2efda"/><rect x="215.72" y="173.40" width="239.04" height="13.80" fill="#fff2cc"/><rect x="454.76" y="159.60" width="79.68" height="27.60" fill="#e2efda"/><rect x="96.20" y="187.20" width="398.40" height="13.80" fill="#fff"/><rect x="494.60" y="187.20" width="39.84" height="13.80" fill="#fff"/><rect x="96.20" y="201.00" width="438.24" height="13.80" fill="#ddebf7"/><rect x="96.20" y="214.80" width="398.40" height="13.80" fill="#fff"/><rect x="494.60" y="214.80" width="39.84" height="13.80" fill="#ddebf7"/><rect x="96.20" y="228.60" width="438.24" height="13.80" fill="#ddebf7"/><rect x="96.20" y="242.40" width="398.40" height="13.80" fill="#fff"/><rect x="494.60" y="242.40" width="39.84" height="13.80" fill="#ddebf7"/><rect x="96.20" y="256.20" width="438.24" height="13.80" fill="#ddebf7"/><rect x="96.20" y="270.00" width="398.40" height="13.80" fill="#fff"/><rect x="494.60" y="270.00" width="39.84" height="13.80" fill="#ddebf7"/><rect x="96.20" y="283.80" width="438.24" height="13.80" fill="#ddebf7"/><rect x="96.20" y="297.60" width="398.40" height="13.80" fill="#fff"/><rect x="494.60" y="297.60" width="39.84" height="13.80" fill="#ddebf7"/><rect x="96.20" y="311.40" width="438.24" height="13.80" fill="#ddebf7"/><rect x="96.20" y="325.20" width="398.40" height="13.80" fill="#fff"/><rect x="494.60" y="325.20" width="39.84" height="13.80" fill="#ddebf7"/><rect x="96.20" y="339.00" width="438.24" height="13.80" fill="#ddebf7"/><rect x="96.20" y="352.80" width="398.40" height="13.80" fill="#fff"/><rect x="494.60" y="352.80" width="39.84" height="13.80" fill="#ddebf7"/><rect x="96.20" y="366.60" width="438.24" height="13.80" fill="#ddebf7"/><rect x="96.20" y="380.40" width="398.40" height="13.80" fill="#fff"/><rect x="494.60" y="380.40" width="39.84" height="13.80" fill="#ddebf7"/><rect x="96.20" y="394.20" width="438.24" height="13.80" fill="#ddebf7"/><rect x="96.20" y="408.00" width="398.40" height="13.80" fill="#fff"/><rect x="494.60" y="408.00" width="39.84" height="13.80" fill="#ddebf7"/><rect x="96.20" y="421.80" width="438.24" height="13.80" fill="#ddebf7"/><rect x="96.20" y="435.60" width="398.40" height="13.80" fill="#fff"/><rect x="494.60" y="435.60" width="39.84" height="13.80" fill="#ddebf7"/><rect x="96.20" y="449.40" width="438.24" height="13.80" fill="#ddebf7"/><rect x="96.20" y="463.20" width="398.40" height="13.80" fill="#fff"/><rect x="494.60" y="463.20" width="39.84" height="13.80" fill="#ddebf7"/><rect x="96.20" y="477.00" width="438.24" height="13.80" fill="#ddebf7"/><rect x="96.20" y="490.80" width="398.40" height="13.80" fill="#fff"/><rect x="494.60" y="490.80" width="39.84" height="13.80" fill="#ddebf7"/><rect x="96.20" y="504.60" width="438.24" height="13.80" fill="#ddebf7"/><rect x="96.20" y="518.40" width="398.40" height="13.80" fill="#fff"/><rect x="494.60" y="518.40" width="39.84" height="13.80" fill="#ddebf7"/><rect x="96.20" y="200.25" width="438.24" height="1.50" fill="#a8a8a8"/><rect x="96.20" y="214.05" width="438.24" height="1.50" fill="#a8a8a8"/><rect x="96.20" y="227.85" width="438.24" height="1.50" fill="#a8a8a8"/><rect x="96.20" y="241.65" width="438.24" height="1.50" fill="#a8a8a8"/><rect x="96.20" y="255.45" width="438.24" height="1.50" fill="#a8a8a8"/><rect x="96.20" y="269.25" width="438.24" height="1.50" fill="#a8a8a8"/><rect x="96.20" y="283.05" width="438.24" height="1.50" fill="#a8a8a8"/><rect x="96.20" y="296.85" width="438.24" height="1.50" fill="#a8a8a8"/><rect x="96.20" y="310.65" width="438.24" height="1.50" fill="#a8a8a8"/><rect x="96.20" y="324.45" width="438.24" height="1.50" fill="#a8a8a8"/><rect x="96.20" y="338.25" width="438.24" height="1.50" fill="#a8a8a8"/><rect x="96.20" y="352.05" width="438.24" height="1.50" fill="#a8a8a8"/><rect x="96.20" y="365.85" width="438.24" height="1.50" fill="#a8a8a8"/><rect x="96.20" y="379.65" width="438.24" height="1.50" fill="#a8a8a8"/><rect x="96.20" y="393.45" width="438.24" height="1.50" fill="#a8a8a8"/><rect x="96.20" y="407.25" width="438.24" height="1.50" fill="#a8a8a8"/><rect x="96.20" y="421.05" width="438.24" height="1.50" fill="#a8a8a8"/><rect x="96.20" y="434.85" width="438.24" height="1.50" fill="#a8a8a8"/><rect x="96.20" y="448.65" width="438.24" height="1.50" fill="#a8a8a8"/><rect x="96.20" y="462.45" width="438.24" height="1.50" fill="#a8a8a8"/><rect x="96.20" y="476.25" width="438.24" height="1.50" fill="#a8a8a8"/><rect x="96.20" y="490.05" width="438.24" height="1.50" fill="#a8a8a8"/><rect x="96.20" y="503.85" width="438.24" height="1.50" fill="#a8a8a8"/><rect x="96.20" y="517.65" width="438.24" height="1.50" fill="#a8a8a8"/><rect x="96.20" y="531.45" width="438.24" height="1.50" fill="#a8a8a8"/><rect x="254.96" y="173.40" width="1.20" height="372.60" fill="#666"/><rect x="294.80" y="173.40" width="1.20" height="372.60" fill="#666"/><rect x="334.64" y="173.40" width="1.20" height="372.60" fill="#666"/><rect x="374.48" y="173.40" width="1.20" height="372.60" fill="#666"/><rect x="414.32" y="173.40" width="1.20" height="372.60" fill="#666"/><rect x="96.20" y="158.80" width="438.24" height="1.60" fill="#3c3c3c"/><rect x="215.72" y="172.80" width="239.04" height="1.20" fill="#555"/><rect x="96.20" y="186.45" width="438.24" height="1.50" fill="#3c3c3c"/><rect x="135.29" y="159.60" width="1.50" height="386.40" fill="#3c3c3c"/><rect x="175.13" y="159.60" width="1.50" height="386.40" fill="#3c3c3c"/><rect x="214.97" y="159.60" width="1.50" height="386.40" fill="#3c3c3c"/><rect x="454.01" y="132.00" width="1.50" height="414.00" fill="#3c3c3c"/><rect x="493.85" y="159.60" width="1.50" height="386.40" fill="#3c3c3c"/><rect x="533.69" y="132.00" width="1.50" height="414.00" fill="#3c3c3c"/><rect x="374.33" y="132.00" width="1.50" height="27.60" fill="#3c3c3c"/><rect x="535.19" y="186.45" width="398.40" height="1.50" fill="#cfcfcf"/></g></svg>
<div class="t" style="left:115.87px;top:1.90px;font-size:15px;line-height:21px;color:#111;font-weight:normal;font-family:'Liberation Sans',sans-serif;transform-origin:0 0;transform:scaleX(1.0349);-webkit-text-stroke:0.75px #111;">家計簿</div>
<div class="t" style="left:291.52px;top:6.90px;font-size:9px;line-height:13px;color:#1a1a1a;font-weight:normal;font-family:'Liberation Sans',sans-serif;transform-origin:0 0;transform:scaleX(0.9750);-webkit-text-stroke:0.45px #1a1a1a;">繰り越し残高</div>
<div class="t" style="left:383.26px;top:6.90px;font-size:9.2px;line-height:13px;color:#4a4a4a;font-weight:normal;font-family:'Liberation Sans',sans-serif;transform-origin:0 0;transform:scaleX(0.9448);-webkit-text-stroke:0.2px #4a4a4a;">100000</div>
<div class="t" style="left:11.60px;top:35.60px;font-size:9px;line-height:13px;color:#1a1a1a;font-weight:normal;font-family:'Liberation Sans',sans-serif;transform-origin:0 0;transform:scaleX(0.8941);-webkit-text-stroke:0.45px #1a1a1a;">曜日</div>
<div class="t" style="left:50.82px;top:35.60px;font-size:9px;line-height:13px;color:#1a1a1a;font-weight:normal;font-family:'Liberation Sans',sans-serif;transform-origin:0 0;transform:scaleX(0.9750);-webkit-text-stroke:0.45px #1a1a1a;">日付</div>
<div class="t" style="left:89.88px;top:35.60px;font-size:9px;line-height:13px;color:#1a1a1a;font-weight:normal;font-family:'Liberation Sans',sans-serif;transform-origin:0 0;transform:scaleX(1.0188);-webkit-text-stroke:0.45px #1a1a1a;">収入</div>
<div class="t" style="left:368.56px;top:35.60px;font-size:9px;line-height:13px;color:#1a1a1a;font-weight:normal;font-family:'Liberation Sans',sans-serif;transform-origin:0 0;transform:scaleX(1.0375);-webkit-text-stroke:0.45px #1a1a1a;">合計</div>
<div class="t" style="left:410.10px;top:35.60px;font-size:9px;line-height:13px;color:#1a1a1a;font-weight:normal;font-family:'Liberation Sans',sans-serif;transform-origin:0 0;transform:scaleX(0.9471);-webkit-text-stroke:0.45px #1a1a1a;">残高</div>
<div class="t" style="left:229.36px;top:29.10px;font-size:9px;line-height:13px;color:#1a1a1a;font-weight:normal;font-family:'Liberation Sans',sans-serif;transform-origin:0 0;transform:scaleX(1.0375);-webkit-text-stroke:0.45px #1a1a1a;">支出</div>
<div class="t" style="left:120.21px;top:42.80px;font-size:9px;line-height:13px;color:#1a1a1a;font-weight:normal;font-family:'Liberation Sans',sans-serif;transform-origin:0 0;transform:scaleX(1.0933);-webkit-text-stroke:0.45px #1a1a1a;">家賃</div>
<div class="t" style="left:160.63px;top:42.80px;font-size:9px;line-height:13px;color:#1a1a1a;font-weight:normal;font-family:'Liberation Sans',sans-serif;transform-origin:0 0;transform:scaleX(0.9680);-webkit-text-stroke:0.45px #1a1a1a;">光熱費</div>
<div class="t" style="left:200.41px;top:43.30px;font-size:9px;line-height:13px;color:#1a1a1a;font-weight:normal;font-family:'Liberation Sans',sans-serif;transform-origin:0 0;transform:scaleX(0.9880);-webkit-text-stroke:0.45px #1a1a1a;">通信費</div>
<div class="t" style="left:239.95px;top:42.80px;font-size:9px;line-height:13px;color:#1a1a1a;font-weight:normal;font-family:'Liberation Sans',sans-serif;transform-origin:0 0;transform:scaleX(1.0500);-webkit-text-stroke:0.45px #1a1a1a;">食費</div>
<div class="t" style="left:281.20px;top:42.80px;font-size:9px;line-height:13px;color:#1a1a1a;font-weight:normal;font-family:'Liberation Sans',sans-serif;transform-origin:0 0;transform:scaleX(0.9371);-webkit-text-stroke:0.45px #1a1a1a;">消耗品費</div>
<div class="t" style="left:320.07px;top:42.80px;font-size:9px;line-height:13px;color:#1a1a1a;font-weight:normal;font-family:'Liberation Sans',sans-serif;transform-origin:0 0;transform:scaleX(0.9308);-webkit-text-stroke:0.45px #1a1a1a;">その他</div>
<div class="t" style="left:0.84px;top:56.80px;font-size:9px;line-height:13px;color:#e0302a;font-weight:normal;font-family:'Liberation Sans',sans-serif;transform-origin:0 0;transform:scaleX(0.9571);-webkit-text-stroke:0.45px #e0302a;">日</div>
<div class="t" style="left:72.48px;top:56.80px;font-size:9.2px;line-height:13px;color:#e0302a;font-weight:bold;font-family:'Liberation Sans',sans-serif;transform-origin:0 0;transform:scaleX(0.9800);-webkit-text-stroke:0.2px #e0302a;">1</div>
<div class="t" style="left:258.48px;top:56.80px;font-size:9.2px;line-height:13px;color:#4a4a4a;font-weight:normal;font-family:'Liberation Sans',sans-serif;transform-origin:0 0;transform:scaleX(0.9000);-webkit-text-stroke:0.2px #4a4a4a;">1200</div>
<div class="t" style="left:378.00px;top:56.80px;font-size:9.2px;line-height:13px;color:#4a4a4a;font-weight:normal;font-family:'Liberation Sans',sans-serif;transform-origin:0 0;transform:scaleX(0.9000);-webkit-text-stroke:0.2px #4a4a4a;">1200</div>
<div class="t" style="left:413.34px;top:56.80px;font-size:9.2px;line-height:13px;color:#4a4a4a;font-weight:normal;font-family:'Liberation Sans',sans-serif;transform-origin:0 0;transform:scaleX(0.9000);-webkit-text-stroke:0.2px #4a4a4a;">98800</div>
<div class="t" style="left:0.68px;top:70.60px;font-size:9px;line-height:13px;color:#1a1a1a;font-weight:normal;font-family:'Liberation Sans',sans-serif;transform-origin:0 0;transform:scaleX(1.1167);-webkit-text-stroke:0.45px #1a1a1a;">月</div>
<div class="t" style="left:72.48px;top:70.60px;font-size:9.2px;line-height:13px;color:#1a1a1a;font-weight:bold;font-family:'Liberation Sans',sans-serif;transform-origin:0 0;transform:scaleX(0.9800);-webkit-text-stroke:0.2px #1a1a1a;">2</div>
<div class="t" style="left:262.98px;top:70.60px;font-size:9.2px;line-height:13px;color:#4a4a4a;font-weight:normal;font-family:'Liberation Sans',sans-serif;transform-origin:0 0;transform:scaleX(0.9000);-webkit-text-stroke:0.2px #4a4a4a;">800</div>
<div class="t" style="left:382.50px;top:70.60px;font-size:9.2px;line-height:13px;color:#4a4a4a;font-weight:normal;font-family:'Liberation Sans',sans-serif;transform-origin:0 0;transform:scaleX(0.9000);-webkit-text-stroke:0.2px #4a4a4a;">800</div>
<div class="t" style="left:413.34px;top:70.60px;font-size:9.2px;line-height:13px;color:#4a4a4a;font-weight:normal;font-family:'Liberation Sans',sans-serif;transform-origin:0 0;transform:scaleX(0.9000);-webkit-text-stroke:0.2px #4a4a4a;">98000</div>
<div class="t" style="left:0.84px;top:84.40px;font-size:9px;line-height:13px;color:#1a1a1a;font-weight:normal;font-family:'Liberation Sans',sans-serif;transform-origin:0 0;transform:scaleX(0.9571);-webkit-text-stroke:0.45px #1a1a1a;">火</div>
<div class="t" style="left:72.48px;top:84.40px;font-size:9.2px;line-height:13px;color:#1a1a1a;font-weight:bold;font-family:'Liberation Sans',sans-serif;transform-origin:0 0;transform:scaleX(0.9800);-webkit-text-stroke:0.2px #1a1a1a;">3</div>
<div class="t" style="left:262.98px;top:84.40px;font-size:9.2px;line-height:13px;color:#4a4a4a;font-weight:normal;font-family:'Liberation Sans',sans-serif;transform-origin:0 0;transform:scaleX(0.9000);-webkit-text-stroke:0.2px #4a4a4a;">500</div>
<div class="t" style="left:302.82px;top:84.40px;font-size:9.2px;line-height:13px;color:#4a4a4a;font-weight:normal;font-family:'Liberation Sans',sans-serif;transform-origin:0 0;transform:scaleX(0.9000);-webkit-text-stroke:0.2px #4a4a4a;">300</div>
<div class="t" style="left:382.50px;top:84.40px;font-size:9.2px;line-height:13px;color:#4a4a4a;font-weight:normal;font-family:'Liberation Sans',sans-serif;transform-origin:0 0;transform:scaleX(0.9000);-webkit-text-stroke:0.2px #4a4a4a;">800</div>
<div class="t" style="left:413.34px;top:84.40px;font-size:9.2px;line-height:13px;color:#4a4a4a;font-weight:normal;font-family:'Liberation Sans',sans-serif;transform-origin:0 0;transform:scaleX(0.9000);-webkit-text-stroke:0.2px #4a4a4a;">97200</div>
<div class="t" style="left:0.84px;top:98.20px;font-size:9px;line-height:13px;color:#1a1a1a;font-weight:normal;font-family:'Liberation Sans',sans-serif;transform-origin:0 0;transform:scaleX(0.9571);-webkit-text-stroke:0.45px #1a1a1a;">水</div>
<div class="t" style="left:72.48px;top:98.20px;font-size:9.2px;line-height:13px;color:#1a1a1a;font-weight:bold;font-family:'Liberation Sans',sans-serif;transform-origin:0 0;transform:scaleX(0.9800);-webkit-text-stroke:0.2px #1a1a1a;">4</div>
<div class="t" style="left:258.48px;top:98.20px;font-size:9.2px;line-height:13px;color:#4a4a4a;font-weight:normal;font-family:'Liberation Sans',sans-serif;transform-origin:0 0;transform:scaleX(0.9000);-webkit-text-stroke:0.2px #4a4a4a;">1000</div>
<div class="t" style="left:378.00px;top:98.20px;font-size:9.2px;line-height:13px;color:#4a4a4a;font-weight:normal;font-family:'Liberation Sans',sans-serif;transform-origin:0 0;transform:scaleX(0.9000);-webkit-text-stroke:0.2px #4a4a4a;">1000</div>
<div class="t" style="left:413.34px;top:98.20px;font-size:9.2px;line-height:13px;color:#4a4a4a;font-weight:normal;font-family:'Liberation Sans',sans-serif;transform-origin:0 0;transform:scaleX(0.9000);-webkit-text-stroke:0.2px #4a4a4a;">96200</div>
<div class="t" style="left:0.84px;top:112.00px;font-size:9px;line-height:13px;color:#1a1a1a;font-weight:normal;font-family:'Liberation Sans',sans-serif;transform-origin:0 0;transform:scaleX(0.9571);-webkit-text-stroke:0.45px #1a1a1a;">木</div>
<div class="t" style="left:72.48px;top:112.00px;font-size:9.2px;line-height:13px;color:#1a1a1a;font-weight:bold;font-family:'Liberation Sans',sans-serif;transform-origin:0 0;transform:scaleX(0.9800);-webkit-text-stroke:0.2px #1a1a1a;">5</div>
<div class="t" style="left:258.48px;top:112.00px;font-size:9.2px;line-height:13px;color:#4a4a4a;font-weight:normal;font-family:'Liberation Sans',sans-serif;transform-origin:0 0;transform:scaleX(0.9000);-webkit-text-stroke:0.2px #4a4a4a;">1000</div>
<div class="t" style="left:378.00px;top:112.00px;font-size:9.2px;line-height:13px;color:#4a4a4a;font-weight:normal;font-family:'Liberation Sans',sans-serif;transform-origin:0 0;transform:scaleX(0.9000);-webkit-text-stroke:0.2px #4a4a4a;">1000</div>
<div class="t" style="left:413.34px;top:112.00px;font-size:9.2px;line-height:13px;color:#4a4a4a;font-weight:normal;font-family:'Liberation Sans',sans-serif;transform-origin:0 0;transform:scaleX(0.9000);-webkit-text-stroke:0.2px #4a4a4a;">95200</div>
<div class="t" style="left:0.84px;top:125.80px;font-size:9px;line-height:13px;color:#1a1a1a;font-weight:normal;font-family:'Liberation Sans',sans-serif;transform-origin:0 0;transform:scaleX(0.9571);-webkit-text-stroke:0.45px #1a1a1a;">金</div>
<div class="t" style="left:72.48px;top:125.80px;font-size:9.2px;line-height:13px;color:#1a1a1a;font-weight:bold;font-family:'Liberation Sans',sans-serif;transform-origin:0 0;transform:scaleX(0.9800);-webkit-text-stroke:0.2px #1a1a1a;">6</div>
<div class="t" style="left:262.98px;top:125.80px;font-size:9.2px;line-height:13px;color:#4a4a4a;font-weight:normal;font-family:'Liberation Sans',sans-serif;transform-origin:0 0;transform:scaleX(0.9000);-webkit-text-stroke:0.2px #4a4a4a;">900</div>
<div class="t" style="left:382.50px;top:125.80px;font-size:9.2px;line-height:13px;color:#4a4a4a;font-weight:normal;font-family:'Liberation Sans',sans-serif;transform-origin:0 0;transform:scaleX(0.9000);-webkit-text-stroke:0.2px #4a4a4a;">900</div>
<div class="t" style="left:413.34px;top:125.80px;font-size:9.2px;line-height:13px;color:#4a4a4a;font-weight:normal;font-family:'Liberation Sans',sans-serif;transform-origin:0 0;transform:scaleX(0.9000);-webkit-text-stroke:0.2px #4a4a4a;">94300</div>
<div class="t" style="left:0.84px;top:139.60px;font-size:9px;line-height:13px;color:#4a7cc4;font-weight:normal;font-family:'Liberation Sans',sans-serif;transform-origin:0 0;transform:scaleX(0.9571);-webkit-text-stroke:0.45px #4a7cc4;">土</div>
<div class="t" style="left:72.48px;top:139.60px;font-size:9.2px;line-height:13px;color:#4a7cc4;font-weight:bold;font-family:'Liberation Sans',sans-serif;transform-origin:0 0;transform:scaleX(0.9800);-webkit-text-stroke:0.2px #4a7cc4;">7</div>
<div class="t" style="left:258.48px;top:139.60px;font-size:9.2px;line-height:13px;color:#4a4a4a;font-weight:normal;font-family:'Liberation Sans',sans-serif;transform-origin:0 0;transform:scaleX(0.9000);-webkit-text-stroke:0.2px #4a4a4a;">1300</div>
<div class="t" style="left:298.32px;top:139.60px;font-size:9.2px;line-height:13px;color:#4a4a4a;font-weight:normal;font-family:'Liberation Sans',sans-serif;transform-origin:0 0;transform:scaleX(0.9000);-webkit-text-stroke:0.2px #4a4a4a;">1500</div>
<div class="t" style="left:338.16px;top:139.60px;font-size:9.2px;line-height:13px;color:#4a4a4a;font-weight:normal;font-family:'Liberation Sans',sans-serif;transform-origin:0 0;transform:scaleX(0.9000);-webkit-text-stroke:0.2px #4a4a4a;">3000</div>
<div class="t" style="left:378.00px;top:139.60px;font-size:9.2px;line-height:13px;color:#4a4a4a;font-weight:normal;font-family:'Liberation Sans',sans-serif;transform-origin:0 0;transform:scaleX(0.9000);-webkit-text-stroke:0.2px #4a4a4a;">5800</div>
<div class="t" style="left:413.34px;top:139.60px;font-size:9.2px;line-height:13px;color:#4a4a4a;font-weight:normal;font-family:'Liberation Sans',sans-serif;transform-origin:0 0;transform:scaleX(0.9000);-webkit-text-stroke:0.2px #4a4a4a;">88500</div>
<div class="t" style="left:0.84px;top:153.40px;font-size:9px;line-height:13px;color:#e0302a;font-weight:normal;font-family:'Liberation Sans',sans-serif;transform-origin:0 0;transform:scaleX(0.9571);-webkit-text-stroke:0.45px #e0302a;">日</div>
<div class="t" style="left:72.48px;top:153.40px;font-size:9.2px;line-height:13px;color:#e0302a;font-weight:bold;font-family:'Liberation Sans',sans-serif;transform-origin:0 0;transform:scaleX(0.9800);-webkit-text-stroke:0.2px #e0302a;">8</div>
<div class="t" style="left:258.48px;top:153.40px;font-size:9.2px;line-height:13px;color:#4a4a4a;font-weight:normal;font-family:'Liberation Sans',sans-serif;transform-origin:0 0;transform:scaleX(0.9000);-webkit-text-stroke:0.2px #4a4a4a;">1500</div>
<div class="t" style="left:378.00px;top:153.40px;font-size:9.2px;line-height:13px;color:#4a4a4a;font-weight:normal;font-family:'Liberation Sans',sans-serif;transform-origin:0 0;transform:scaleX(0.9000);-webkit-text-stroke:0.2px #4a4a4a;">1500</div>
<div class="t" style="left:413.34px;top:153.40px;font-size:9.2px;line-height:13px;color:#4a4a4a;font-weight:normal;font-family:'Liberation Sans',sans-serif;transform-origin:0 0;transform:scaleX(0.9000);-webkit-text-stroke:0.2px #4a4a4a;">87000</div>
<div class="t" style="left:0.68px;top:167.20px;font-size:9px;line-height:13px;color:#1a1a1a;font-weight:normal;font-family:'Liberation Sans',sans-serif;transform-origin:0 0;transform:scaleX(1.1167);-webkit-text-stroke:0.45px #1a1a1a;">月</div>
<div class="t" style="left:72.48px;top:167.20px;font-size:9.2px;line-height:13px;color:#1a1a1a;font-weight:bold;font-family:'Liberation Sans',sans-serif;transform-origin:0 0;transform:scaleX(0.9800);-webkit-text-stroke:0.2px #1a1a1a;">9</div>
<div class="t" style="left:258.48px;top:167.20px;font-size:9.2px;line-height:13px;color:#4a4a4a;font-weight:normal;font-family:'Liberation Sans',sans-serif;transform-origin:0 0;transform:scaleX(0.9000);-webkit-text-stroke:0.2px #4a4a4a;">1500</div>
<div class="t" style="left:378.00px;top:167.20px;font-size:9.2px;line-height:13px;color:#4a4a4a;font-weight:normal;font-family:'Liberation Sans',sans-serif;transform-origin:0 0;transform:scaleX(0.9000);-webkit-text-stroke:0.2px #4a4a4a;">1500</div>
<div class="t" style="left:413.34px;top:167.20px;font-size:9.2px;line-height:13px;color:#4a4a4a;font-weight:normal;font-family:'Liberation Sans',sans-serif;transform-origin:0 0;transform:scaleX(0.9000);-webkit-text-stroke:0.2px #4a4a4a;">85500</div>
<div class="t" style="left:0.84px;top:181.00px;font-size:9px;line-height:13px;color:#1a1a1a;font-weight:normal;font-family:'Liberation Sans',sans-serif;transform-origin:0 0;transform:scaleX(0.9571);-webkit-text-stroke:0.45px #1a1a1a;">火</div>
<div class="t" style="left:67.58px;top:181.00px;font-size:9.2px;line-height:13px;color:#1a1a1a;font-weight:bold;font-family:'Liberation Sans',sans-serif;transform-origin:0 0;transform:scaleX(0.9800);-webkit-text-stroke:0.2px #1a1a1a;">10</div>
<div class="t" style="left:262.98px;top:181.00px;font-size:9.2px;line-height:13px;color:#4a4a4a;font-weight:normal;font-family:'Liberation Sans',sans-serif;transform-origin:0 0;transform:scaleX(0.9000);-webkit-text-stroke:0.2px #4a4a4a;">900</div>
<div class="t" style="left:382.50px;top:181.00px;font-size:9.2px;line-height:13px;color:#4a4a4a;font-weight:normal;font-family:'Liberation Sans',sans-serif;transform-origin:0 0;transform:scaleX(0.9000);-webkit-text-stroke:0.2px #4a4a4a;">900</div>
<div class="t" style="left:413.34px;top:181.00px;font-size:9.2px;line-height:13px;color:#4a4a4a;font-weight:normal;font-family:'Liberation Sans',sans-serif;transform-origin:0 0;transform:scaleX(0.9000);-webkit-text-stroke:0.2px #4a4a4a;">84600</div>
<div class="t" style="left:0.84px;top:194.80px;font-size:9px;line-height:13px;color:#1a1a1a;font-weight:normal;font-family:'Liberation Sans',sans-serif;transform-origin:0 0;transform:scaleX(0.9571);-webkit-text-stroke:0.45px #1a1a1a;">水</div>
<div class="t" style="left:68.56px;top:194.80px;font-size:9.2px;line-height:13px;color:#1a1a1a;font-weight:bold;font-family:'Liberation Sans',sans-serif;transform-origin:0 0;transform:scaleX(0.9800);-webkit-text-stroke:0.2px #1a1a1a;">11</div>
<div class="t" style="left:258.48px;top:194.80px;font-size:9.2px;line-height:13px;color:#4a4a4a;font-weight:normal;font-family:'Liberation Sans',sans-serif;transform-origin:0 0;transform:scaleX(0.9000);-webkit-text-stroke:0.2px #4a4a4a;">1200</div>
<div class="t" style="left:378.00px;top:194.80px;font-size:9.2px;line-height:13px;color:#4a4a4a;font-weight:normal;font-family:'Liberation Sans',sans-serif;transform-origin:0 0;transform:scaleX(0.9000);-webkit-text-stroke:0.2px #4a4a4a;">1200</div>
<div class="t" style="left:413.34px;top:194.80px;font-size:9.2px;line-height:13px;color:#4a4a4a;font-weight:normal;font-family:'Liberation Sans',sans-serif;transform-origin:0 0;transform:scaleX(0.9000);-webkit-text-stroke:0.2px #4a4a4a;">83400</div>
<div class="t" style="left:0.84px;top:208.60px;font-size:9px;line-height:13px;color:#1a1a1a;font-weight:normal;font-family:'Liberation Sans',sans-serif;transform-origin:0 0;transform:scaleX(0.9571);-webkit-text-stroke:0.45px #1a1a1a;">木</div>
<div class="t" style="left:67.58px;top:208.60px;font-size:9.2px;line-height:13px;color:#1a1a1a;font-weight:bold;font-family:'Liberation Sans',sans-serif;transform-origin:0 0;transform:scaleX(0.9800);-webkit-text-stroke:0.2px #1a1a1a;">12</div>
<div class="t" style="left:262.98px;top:208.60px;font-size:9.2px;line-height:13px;color:#4a4a4a;font-weight:normal;font-family:'Liberation Sans',sans-serif;transform-origin:0 0;transform:scaleX(0.9000);-webkit-text-stroke:0.2px #4a4a4a;">800</div>
<div class="t" style="left:382.50px;top:208.60px;font-size:9.2px;line-height:13px;color:#4a4a4a;font-weight:normal;font-family:'Liberation Sans',sans-serif;transform-origin:0 0;transform:scaleX(0.9000);-webkit-text-stroke:0.2px #4a4a4a;">800</div>
<div class="t" style="left:413.34px;top:208.60px;font-size:9.2px;line-height:13px;color:#4a4a4a;font-weight:normal;font-family:'Liberation Sans',sans-serif;transform-origin:0 0;transform:scaleX(0.9000);-webkit-text-stroke:0.2px #4a4a4a;">82600</div>
<div class="t" style="left:0.84px;top:222.40px;font-size:9px;line-height:13px;color:#1a1a1a;font-weight:normal;font-family:'Liberation Sans',sans-serif;transform-origin:0 0;transform:scaleX(0.9571);-webkit-text-stroke:0.45px #1a1a1a;">金</div>
<div class="t" style="left:67.58px;top:222.40px;font-size:9.2px;line-height:13px;color:#1a1a1a;font-weight:bold;font-family:'Liberation Sans',sans-serif;transform-origin:0 0;transform:scaleX(0.9800);-webkit-text-stroke:0.2px #1a1a1a;">13</div>
<div class="t" style="left:262.98px;top:222.40px;font-size:9.2px;line-height:13px;color:#4a4a4a;font-weight:normal;font-family:'Liberation Sans',sans-serif;transform-origin:0 0;transform:scaleX(0.9000);-webkit-text-stroke:0.2px #4a4a4a;">500</div>
<div class="t" style="left:382.50px;top:222.40px;font-size:9.2px;line-height:13px;color:#4a4a4a;font-weight:normal;font-family:'Liberation Sans',sans-serif;transform-origin:0 0;transform:scaleX(0.9000);-webkit-text-stroke:0.2px #4a4a4a;">500</div>
<div class="t" style="left:413.34px;top:222.40px;font-size:9.2px;line-height:13px;color:#4a4a4a;font-weight:normal;font-family:'Liberation Sans',sans-serif;transform-origin:0 0;transform:scaleX(0.9000);-webkit-text-stroke:0.2px #4a4a4a;">82100</div>
<div class="t" style="left:0.84px;top:236.20px;font-size:9px;line-height:13px;color:#4a7cc4;font-weight:normal;font-family:'Liberation Sans',sans-serif;transform-origin:0 0;transform:scaleX(0.9571);-webkit-text-stroke:0.45px #4a7cc4;">土</div>
<div class="t" style="left:67.58px;top:236.20px;font-size:9.2px;line-height:13px;color:#4a7cc4;font-weight:bold;font-family:'Liberation Sans',sans-serif;transform-origin:0 0;transform:scaleX(0.9800);-webkit-text-stroke:0.2px #4a7cc4;">14</div>
<div class="t" style="left:258.48px;top:236.20px;font-size:9.2px;line-height:13px;color:#4a4a4a;font-weight:normal;font-family:'Liberation Sans',sans-serif;transform-origin:0 0;transform:scaleX(0.9000);-webkit-text-stroke:0.2px #4a4a4a;">1000</div>
<div class="t" style="left:298.32px;top:236.20px;font-size:9.2px;line-height:13px;color:#4a4a4a;font-weight:normal;font-family:'Liberation Sans',sans-serif;transform-origin:0 0;transform:scaleX(0.9000);-webkit-text-stroke:0.2px #4a4a4a;">1500</div>
<div class="t" style="left:378.00px;top:236.20px;font-size:9.2px;line-height:13px;color:#4a4a4a;font-weight:normal;font-family:'Liberation Sans',sans-serif;transform-origin:0 0;transform:scaleX(0.9000);-webkit-text-stroke:0.2px #4a4a4a;">2500</div>
<div class="t" style="left:413.34px;top:236.20px;font-size:9.2px;line-height:13px;color:#4a4a4a;font-weight:normal;font-family:'Liberation Sans',sans-serif;transform-origin:0 0;transform:scaleX(0.9000);-webkit-text-stroke:0.2px #4a4a4a;">79600</div>
<div class="t" style="left:0.84px;top:250.00px;font-size:9px;line-height:13px;color:#e0302a;font-weight:normal;font-family:'Liberation Sans',sans-serif;transform-origin:0 0;transform:scaleX(0.9571);-webkit-text-stroke:0.45px #e0302a;">日</div>
<div class="t" style="left:67.58px;top:250.00px;font-size:9.2px;line-height:13px;color:#e0302a;font-weight:bold;font-family:'Liberation Sans',sans-serif;transform-origin:0 0;transform:scaleX(0.9800);-webkit-text-stroke:0.2px #e0302a;">15</div>
<div class="t" style="left:258.48px;top:250.00px;font-size:9.2px;line-height:13px;color:#4a4a4a;font-weight:normal;font-family:'Liberation Sans',sans-serif;transform-origin:0 0;transform:scaleX(0.9000);-webkit-text-stroke:0.2px #4a4a4a;">1000</div>
<div class="t" style="left:378.00px;top:250.00px;font-size:9.2px;line-height:13px;color:#4a4a4a;font-weight:normal;font-family:'Liberation Sans',sans-serif;transform-origin:0 0;transform:scaleX(0.9000);-webkit-text-stroke:0.2px #4a4a4a;">1000</div>
<div class="t" style="left:413.34px;top:250.00px;font-size:9.2px;line-height:13px;color:#4a4a4a;font-weight:normal;font-family:'Liberation Sans',sans-serif;transform-origin:0 0;transform:scaleX(0.9000);-webkit-text-stroke:0.2px #4a4a4a;">78600</div>
<div class="t" style="left:0.68px;top:263.80px;font-size:9px;line-height:13px;color:#1a1a1a;font-weight:normal;font-family:'Liberation Sans',sans-serif;transform-origin:0 0;transform:scaleX(1.1167);-webkit-text-stroke:0.45px #1a1a1a;">月</div>
<div class="t" style="left:67.58px;top:263.80px;font-size:9.2px;line-height:13px;color:#1a1a1a;font-weight:bold;font-family:'Liberation Sans',sans-serif;transform-origin:0 0;transform:scaleX(0.9800);-webkit-text-stroke:0.2px #1a1a1a;">16</div>
<div class="t" style="left:262.98px;top:263.80px;font-size:9.2px;line-height:13px;color:#4a4a4a;font-weight:normal;font-family:'Liberation Sans',sans-serif;transform-origin:0 0;transform:scaleX(0.9000);-webkit-text-stroke:0.2px #4a4a4a;">900</div>
<div class="t" style="left:382.50px;top:263.80px;font-size:9.2px;line-height:13px;color:#4a4a4a;font-weight:normal;font-family:'Liberation Sans',sans-serif;transform-origin:0 0;transform:scaleX(0.9000);-webkit-text-stroke:0.2px #4a4a4a;">900</div>
<div class="t" style="left:413.34px;top:263.80px;font-size:9.2px;line-height:13px;color:#4a4a4a;font-weight:normal;font-family:'Liberation Sans',sans-serif;transform-origin:0 0;transform:scaleX(0.9000);-webkit-text-stroke:0.2px #4a4a4a;">77700</div>
<div class="t" style="left:0.84px;top:277.60px;font-size:9px;line-height:13px;color:#1a1a1a;font-weight:normal;font-family:'Liberation Sans',sans-serif;transform-origin:0 0;transform:scaleX(0.9571);-webkit-text-stroke:0.45px #1a1a1a;">火</div>
<div class="t" style="left:67.58px;top:277.60px;font-size:9.2px;line-height:13px;color:#1a1a1a;font-weight:bold;font-family:'Liberation Sans',sans-serif;transform-origin:0 0;transform:scaleX(0.9800);-webkit-text-stroke:0.2px #1a1a1a;">17</div>
<div class="t" style="left:258.48px;top:277.60px;font-size:9.2px;line-height:13px;color:#4a4a4a;font-weight:normal;font-family:'Liberation Sans',sans-serif;transform-origin:0 0;transform:scaleX(0.9000);-webkit-text-stroke:0.2px #4a4a4a;">1300</div>
<div class="t" style="left:378.00px;top:277.60px;font-size:9.2px;line-height:13px;color:#4a4a4a;font-weight:normal;font-family:'Liberation Sans',sans-serif;transform-origin:0 0;transform:scaleX(0.9000);-webkit-text-stroke:0.2px #4a4a4a;">1300</div>
<div class="t" style="left:413.34px;top:277.60px;font-size:9.2px;line-height:13px;color:#4a4a4a;font-weight:normal;font-family:'Liberation Sans',sans-serif;transform-origin:0 0;transform:scaleX(0.9000);-webkit-text-stroke:0.2px #4a4a4a;">76400</div>
<div class="t" style="left:0.84px;top:291.40px;font-size:9px;line-height:13px;color:#1a1a1a;font-weight:normal;font-family:'Liberation Sans',sans-serif;transform-origin:0 0;transform:scaleX(0.9571);-webkit-text-stroke:0.45px #1a1a1a;">水</div>
<div class="t" style="left:67.58px;top:291.40px;font-size:9.2px;line-height:13px;color:#1a1a1a;font-weight:bold;font-family:'Liberation Sans',sans-serif;transform-origin:0 0;transform:scaleX(0.9800);-webkit-text-stroke:0.2px #1a1a1a;">18</div>
<div class="t" style="left:258.48px;top:291.40px;font-size:9.2px;line-height:13px;color:#4a4a4a;font-weight:normal;font-family:'Liberation Sans',sans-serif;transform-origin:0 0;transform:scaleX(0.9000);-webkit-text-stroke:0.2px #4a4a4a;">1500</div>
<div class="t" style="left:302.82px;top:291.40px;font-size:9.2px;line-height:13px;color:#4a4a4a;font-weight:normal;font-family:'Liberation Sans',sans-serif;transform-origin:0 0;transform:scaleX(0.9000);-webkit-text-stroke:0.2px #4a4a4a;">500</div>
<div class="t" style="left:378.00px;top:291.40px;font-size:9.2px;line-height:13px;color:#4a4a4a;font-weight:normal;font-family:'Liberation Sans',sans-serif;transform-origin:0 0;transform:scaleX(0.9000);-webkit-text-stroke:0.2px #4a4a4a;">2000</div>
<div class="t" style="left:413.34px;top:291.40px;font-size:9.2px;line-height:13px;color:#4a4a4a;font-weight:normal;font-family:'Liberation Sans',sans-serif;transform-origin:0 0;transform:scaleX(0.9000);-webkit-text-stroke:0.2px #4a4a4a;">74400</div>
<div class="t" style="left:0.84px;top:305.20px;font-size:9px;line-height:13px;color:#1a1a1a;font-weight:normal;font-family:'Liberation Sans',sans-serif;transform-origin:0 0;transform:scaleX(0.9571);-webkit-text-stroke:0.45px #1a1a1a;">木</div>
<div class="t" style="left:67.58px;top:305.20px;font-size:9.2px;line-height:13px;color:#1a1a1a;font-weight:bold;font-family:'Liberation Sans',sans-serif;transform-origin:0 0;transform:scaleX(0.9800);-webkit-text-stroke:0.2px #1a1a1a;">19</div>
<div class="t" style="left:262.98px;top:305.20px;font-size:9.2px;line-height:13px;color:#4a4a4a;font-weight:normal;font-family:'Liberation Sans',sans-serif;transform-origin:0 0;transform:scaleX(0.9000);-webkit-text-stroke:0.2px #4a4a4a;">900</div>
<div class="t" style="left:382.50px;top:305.20px;font-size:9.2px;line-height:13px;color:#4a4a4a;font-weight:normal;font-family:'Liberation Sans',sans-serif;transform-origin:0 0;transform:scaleX(0.9000);-webkit-text-stroke:0.2px #4a4a4a;">900</div>
<div class="t" style="left:413.34px;top:305.20px;font-size:9.2px;line-height:13px;color:#4a4a4a;font-weight:normal;font-family:'Liberation Sans',sans-serif;transform-origin:0 0;transform:scaleX(0.9000);-webkit-text-stroke:0.2px #4a4a4a;">73500</div>
<div class="t" style="left:0.84px;top:319.00px;font-size:9px;line-height:13px;color:#1a1a1a;font-weight:normal;font-family:'Liberation Sans',sans-serif;transform-origin:0 0;transform:scaleX(0.9571);-webkit-text-stroke:0.45px #1a1a1a;">金</div>
<div class="t" style="left:67.58px;top:319.00px;font-size:9.2px;line-height:13px;color:#1a1a1a;font-weight:bold;font-family:'Liberation Sans',sans-serif;transform-origin:0 0;transform:scaleX(0.9800);-webkit-text-stroke:0.2px #1a1a1a;">20</div>
<div class="t" style="left:258.48px;top:319.00px;font-size:9.2px;line-height:13px;color:#4a4a4a;font-weight:normal;font-family:'Liberation Sans',sans-serif;transform-origin:0 0;transform:scaleX(0.9000);-webkit-text-stroke:0.2px #4a4a4a;">1200</div>
<div class="t" style="left:378.00px;top:319.00px;font-size:9.2px;line-height:13px;color:#4a4a4a;font-weight:normal;font-family:'Liberation Sans',sans-serif;transform-origin:0 0;transform:scaleX(0.9000);-webkit-text-stroke:0.2px #4a4a4a;">1200</div>
<div class="t" style="left:413.34px;top:319.00px;font-size:9.2px;line-height:13px;color:#4a4a4a;font-weight:normal;font-family:'Liberation Sans',sans-serif;transform-origin:0 0;transform:scaleX(0.9000);-webkit-text-stroke:0.2px #4a4a4a;">72300</div>
<div class="t" style="left:0.84px;top:332.80px;font-size:9px;line-height:13px;color:#4a7cc4;font-weight:normal;font-family:'Liberation Sans',sans-serif;transform-origin:0 0;transform:scaleX(0.9571);-webkit-text-stroke:0.45px #4a7cc4;">土</div>
<div class="t" style="left:67.58px;top:332.80px;font-size:9.2px;line-height:13px;color:#4a7cc4;font-weight:bold;font-family:'Liberation Sans',sans-serif;transform-origin:0 0;transform:scaleX(0.9800);-webkit-text-stroke:0.2px #4a7cc4;">21</div>
<div class="t" style="left:262.98px;top:332.80px;font-size:9.2px;line-height:13px;color:#4a4a4a;font-weight:normal;font-family:'Liberation Sans',sans-serif;transform-origin:0 0;transform:scaleX(0.9000);-webkit-text-stroke:0.2px #4a4a4a;">800</div>
<div class="t" style="left:298.32px;top:332.80px;font-size:9.2px;line-height:13px;color:#4a4a4a;font-weight:normal;font-family:'Liberation Sans',sans-serif;transform-origin:0 0;transform:scaleX(0.9000);-webkit-text-stroke:0.2px #4a4a4a;">1500</div>
<div class="t" style="left:378.00px;top:332.80px;font-size:9.2px;line-height:13px;color:#4a4a4a;font-weight:normal;font-family:'Liberation Sans',sans-serif;transform-origin:0 0;transform:scaleX(0.9000);-webkit-text-stroke:0.2px #4a4a4a;">2300</div>
<div class="t" style="left:413.34px;top:332.80px;font-size:9.2px;line-height:13px;color:#4a4a4a;font-weight:normal;font-family:'Liberation Sans',sans-serif;transform-origin:0 0;transform:scaleX(0.9000);-webkit-text-stroke:0.2px #4a4a4a;">70000</div>
<div class="t" style="left:0.84px;top:346.60px;font-size:9px;line-height:13px;color:#e0302a;font-weight:normal;font-family:'Liberation Sans',sans-serif;transform-origin:0 0;transform:scaleX(0.9571);-webkit-text-stroke:0.45px #e0302a;">日</div>
<div class="t" style="left:67.58px;top:346.60px;font-size:9.2px;line-height:13px;color:#e0302a;font-weight:bold;font-family:'Liberation Sans',sans-serif;transform-origin:0 0;transform:scaleX(0.9800);-webkit-text-stroke:0.2px #e0302a;">22</div>
<div class="t" style="left:262.98px;top:346.60px;font-size:9.2px;line-height:13px;color:#4a4a4a;font-weight:normal;font-family:'Liberation Sans',sans-serif;transform-origin:0 0;transform:scaleX(0.9000);-webkit-text-stroke:0.2px #4a4a4a;">500</div>
<div class="t" style="left:338.16px;top:346.60px;font-size:9.2px;line-height:13px;color:#4a4a4a;font-weight:normal;font-family:'Liberation Sans',sans-serif;transform-origin:0 0;transform:scaleX(0.9000);-webkit-text-stroke:0.2px #4a4a4a;">5000</div>
<div class="t" style="left:378.00px;top:346.60px;font-size:9.2px;line-height:13px;color:#4a4a4a;font-weight:normal;font-family:'Liberation Sans',sans-serif;transform-origin:0 0;transform:scaleX(0.9000);-webkit-text-stroke:0.2px #4a4a4a;">5500</div>
<div class="t" style="left:413.34px;top:346.60px;font-size:9.2px;line-height:13px;color:#4a4a4a;font-weight:normal;font-family:'Liberation Sans',sans-serif;transform-origin:0 0;transform:scaleX(0.9000);-webkit-text-stroke:0.2px #4a4a4a;">64500</div>
<div class="t" style="left:0.68px;top:360.40px;font-size:9px;line-height:13px;color:#1a1a1a;font-weight:normal;font-family:'Liberation Sans',sans-serif;transform-origin:0 0;transform:scaleX(1.1167);-webkit-text-stroke:0.45px #1a1a1a;">月</div>
<div class="t" style="left:67.58px;top:360.40px;font-size:9.2px;line-height:13px;color:#1a1a1a;font-weight:bold;font-family:'Liberation Sans',sans-serif;transform-origin:0 0;transform:scaleX(0.9800);-webkit-text-stroke:0.2px #1a1a1a;">23</div>
<div class="t" style="left:258.48px;top:360.40px;font-size:9.2px;line-height:13px;color:#4a4a4a;font-weight:normal;font-family:'Liberation Sans',sans-serif;transform-origin:0 0;transform:scaleX(0.9000);-webkit-text-stroke:0.2px #4a4a4a;">1000</div>
<div class="t" style="left:378.00px;top:360.40px;font-size:9.2px;line-height:13px;color:#4a4a4a;font-weight:normal;font-family:'Liberation Sans',sans-serif;transform-origin:0 0;transform:scaleX(0.9000);-webkit-text-stroke:0.2px #4a4a4a;">1000</div>
<div class="t" style="left:413.34px;top:360.40px;font-size:9.2px;line-height:13px;color:#4a4a4a;font-weight:normal;font-family:'Liberation Sans',sans-serif;transform-origin:0 0;transform:scaleX(0.9000);-webkit-text-stroke:0.2px #4a4a4a;">63500</div>
<div class="t" style="left:0.84px;top:374.20px;font-size:9px;line-height:13px;color:#1a1a1a;font-weight:normal;font-family:'Liberation Sans',sans-serif;transform-origin:0 0;transform:scaleX(0.9571);-webkit-text-stroke:0.45px #1a1a1a;">火</div>
<div class="t" style="left:67.58px;top:374.20px;font-size:9.2px;line-height:13px;color:#1a1a1a;font-weight:bold;font-family:'Liberation Sans',sans-serif;transform-origin:0 0;transform:scaleX(0.9800);-webkit-text-stroke:0.2px #1a1a1a;">24</div>
<div class="t" style="left:258.48px;top:374.20px;font-size:9.2px;line-height:13px;color:#4a4a4a;font-weight:normal;font-family:'Liberation Sans',sans-serif;transform-origin:0 0;transform:scaleX(0.9000);-webkit-text-stroke:0.2px #4a4a4a;">1000</div>
<div class="t" style="left:378.00px;top:374.20px;font-size:9.2px;line-height:13px;color:#4a4a4a;font-weight:normal;font-family:'Liberation Sans',sans-serif;transform-origin:0 0;transform:scaleX(0.9000);-webkit-text-stroke:0.2px #4a4a4a;">1000</div>
<div class="t" style="left:413.34px;top:374.20px;font-size:9.2px;line-height:13px;color:#4a4a4a;font-weight:normal;font-family:'Liberation Sans',sans-serif;transform-origin:0 0;transform:scaleX(0.9000);-webkit-text-stroke:0.2px #4a4a4a;">62500</div>
<div class="t" style="left:0.84px;top:388.00px;font-size:9px;line-height:13px;color:#1a1a1a;font-weight:normal;font-family:'Liberation Sans',sans-serif;transform-origin:0 0;transform:scaleX(0.9571);-webkit-text-stroke:0.45px #1a1a1a;">水</div>
<div class="t" style="left:67.58px;top:388.00px;font-size:9.2px;line-height:13px;color:#1a1a1a;font-weight:bold;font-family:'Liberation Sans',sans-serif;transform-origin:0 0;transform:scaleX(0.9800);-webkit-text-stroke:0.2px #1a1a1a;">25</div>
<div class="t" style="left:262.98px;top:388.00px;font-size:9.2px;line-height:13px;color:#4a4a4a;font-weight:normal;font-family:'Liberation Sans',sans-serif;transform-origin:0 0;transform:scaleX(0.9000);-webkit-text-stroke:0.2px #4a4a4a;">900</div>
<div class="t" style="left:369.00px;top:388.00px;font-size:9.2px;line-height:13px;color:#4a4a4a;font-weight:normal;font-family:'Liberation Sans',sans-serif;transform-origin:0 0;transform:scaleX(0.9000);-webkit-text-stroke:0.2px #4a4a4a;">136900</div>
<div class="t" style="left:408.84px;top:388.00px;font-size:9.2px;line-height:13px;color:#4a4a4a;font-weight:normal;font-family:'Liberation Sans',sans-serif;transform-origin:0 0;transform:scaleX(0.9000);-webkit-text-stroke:0.2px #4a4a4a;">225600</div>
<div class="t" style="left:90.12px;top:388.00px;font-size:9.2px;line-height:13px;color:#4a4a4a;font-weight:normal;font-family:'Liberation Sans',sans-serif;transform-origin:0 0;transform:scaleX(0.9000);-webkit-text-stroke:0.2px #4a4a4a;">300000</div>
<div class="t" style="left:129.96px;top:388.00px;font-size:9.2px;line-height:13px;color:#4a4a4a;font-weight:normal;font-family:'Liberation Sans',sans-serif;transform-origin:0 0;transform:scaleX(0.9000);-webkit-text-stroke:0.2px #4a4a4a;">100000</div>
<div class="t" style="left:174.30px;top:388.00px;font-size:9.2px;line-height:13px;color:#4a4a4a;font-weight:normal;font-family:'Liberation Sans',sans-serif;transform-origin:0 0;transform:scaleX(0.9000);-webkit-text-stroke:0.2px #4a4a4a;">30000</div>
<div class="t" style="left:218.64px;top:388.00px;font-size:9.2px;line-height:13px;color:#4a4a4a;font-weight:normal;font-family:'Liberation Sans',sans-serif;transform-origin:0 0;transform:scaleX(0.9000);-webkit-text-stroke:0.2px #4a4a4a;">6000</div>
<div style="left:358.46px;top:387.30px;width:4.00px;height:4.00px;background:linear-gradient(135deg,#217346 50%,transparent 50%)"></div>
<svg style="position:absolute;left:0;top:0" width="836" height="397"><g transform="translate(-96.8,-131.6)"><rect x="573.98" y="242.10" width="40.44" height="14.40" fill="none" stroke="#2f7d55" stroke-width="1.5"/><rect x="612.52" y="254.60" width="3" height="3" fill="#2f7d55" stroke="#fff" stroke-width="0.5"/></g></svg>
</div>
<div style="left:931.80px;top:115.00px;width:12.00px;height:413.40px;background:#e2e2e2"></div>
<div style="left:933.50px;top:118.00px;width:8.90px;height:9.60px;background:#fff;border:0.6px solid #d0d0d0"></div>
<svg style="position:absolute;left:935.20px;top:120.80px;" width="6" height="4" viewBox="0 0 6 4"><path d="M0.3 3.6 L3 0.6 L5.7 3.6Z" fill="#606060"/></svg>
<div style="left:933.50px;top:128.00px;width:8.90px;height:292.60px;background:#fff;border:0.6px solid #d4d4d4"></div>
<div style="left:933.70px;top:519.80px;width:8.50px;height:8.60px;background:#fff;border:0.6px solid #d0d0d0"></div>
<svg style="position:absolute;left:935.20px;top:522.50px;" width="6" height="4" viewBox="0 0 6 4"><path d="M0.3 0.4 L3 3.4 L5.7 0.4Z" fill="#606060"/></svg>
<div style="left:80.00px;top:528.40px;width:864.00px;height:11.60px;background:#e6e6e6"></div>
<svg style="position:absolute;left:90.50px;top:532.00px;" width="4" height="5" viewBox="0 0 4 5"><path d="M3.2 0.5 L1 2.5 L3.2 4.5" fill="none" stroke="#c4c4c4" stroke-width="0.9"/></svg>
<svg style="position:absolute;left:102.50px;top:532.00px;" width="4" height="5" viewBox="0 0 4 5"><path d="M0.8 0.5 L3 2.5 L0.8 4.5" fill="none" stroke="#c4c4c4" stroke-width="0.9"/></svg>
<div style="left:121.60px;top:528.40px;width:37.50px;height:10.60px;background:#fff"></div>
<div style="left:121.60px;top:538.20px;width:37.50px;height:1.20px;background:#7fb69a"></div>
<div class="t" style="left:125.90px;top:527.70px;font-size:8.5px;line-height:12px;color:#4f8d6c;font-weight:normal;font-family:'Liberation Sans',sans-serif;transform-origin:0 0;">Sheet1</div>
<svg style="position:absolute;left:171.70px;top:529.70px;" width="10" height="10" viewBox="0 0 10 10"><circle cx="5" cy="5" r="4.2" fill="none" stroke="#aaa" stroke-width="0.9"/><path d="M5 2.7 V7.3 M2.7 5 H7.3" stroke="#999" stroke-width="0.9"/></svg>
<div style="left:596.50px;top:531.00px;width:1.00px;height:1.00px;background:#aaa"></div>
<div style="left:596.50px;top:533.50px;width:1.00px;height:1.00px;background:#aaa"></div>
<div style="left:596.50px;top:536.00px;width:1.00px;height:1.00px;background:#aaa"></div>
<div style="left:603.80px;top:529.50px;width:8.50px;height:9.50px;background:#fff;border:0.6px solid #ccc"></div>
<svg style="position:absolute;left:605.50px;top:532.00px;" width="5" height="5" viewBox="0 0 5 5"><path d="M4 0.5 L1 2.5 L4 4.5Z" fill="#555"/></svg>
<div style="left:612.00px;top:529.50px;width:294.50px;height:9.50px;background:#fff;border:0.6px solid #ccc"></div>
<div style="left:923.50px;top:529.50px;width:8.50px;height:9.50px;background:#fff;border:0.6px solid #ccc"></div>
<svg style="position:absolute;left:925.50px;top:532.00px;" width="5" height="5" viewBox="0 0 5 5"><path d="M1 0.5 L4 2.5 L1 4.5Z" fill="#555"/></svg>
<div style="left:80.00px;top:540.00px;width:864.00px;height:13.20px;background:#f0f0f0"></div>
<div style="left:80.00px;top:540.00px;width:864.00px;height:0.80px;background:#dcdcdc"></div>
<div class="t" style="left:83.65px;top:541.30px;font-size:7.6px;line-height:11px;color:#444;font-weight:normal;font-family:'Liberation Sans',sans-serif;transform-origin:0 0;transform:scaleX(0.8500);">準備完了</div>
<svg style="position:absolute;left:720.00px;top:542.00px;" width="10" height="9" viewBox="0 0 10 9"><rect x="0.5" y="0.5" width="8" height="6" fill="#555"/><circle cx="7" cy="6.5" r="2.3" fill="#555" stroke="#f0f0f0" stroke-width="0.8"/></svg>
<div class="t" style="left:729.58px;top:541.30px;font-size:7.6px;line-height:11px;color:#444;font-weight:normal;font-family:'Liberation Sans',sans-serif;transform-origin:0 0;transform:scaleX(0.9167);">表示設定</div>
<div style="left:769.40px;top:540.80px;width:21.60px;height:12.20px;background:#d6d6d6"></div>
<svg style="position:absolute;left:775.50px;top:542.50px;" width="9" height="8" viewBox="0 0 9 8"><rect x="0.5" y="0.5" width="8" height="7" fill="none" stroke="#888" stroke-width="0.8"/><path d="M0.5 3 H8.5 M0.5 5.2 H8.5 M3.2 0.5 V7.5 M5.8 0.5 V7.5" stroke="#aaa" stroke-width="0.6"/></svg>
<svg style="position:absolute;left:798.50px;top:542.50px;" width="9" height="8" viewBox="0 0 9 8"><rect x="0.5" y="0.5" width="8" height="7" fill="none" stroke="#888" stroke-width="0.8"/><rect x="2.3" y="1.8" width="4.4" height="4.6" fill="none" stroke="#aaa" stroke-width="0.6"/></svg>
<svg style="position:absolute;left:821.50px;top:542.50px;" width="9" height="8" viewBox="0 0 9 8"><rect x="0.5" y="0.5" width="8" height="7" fill="none" stroke="#888" stroke-width="0.8"/><path d="M4.5 0.5 V4 H0.5" fill="none" stroke="#888" stroke-width="0.7"/></svg>
<div style="left:841.00px;top:546.30px;width:4.00px;height:0.90px;background:#888"></div>
<div style="left:848.00px;top:546.50px;width:58.00px;height:0.70px;background:#aaa"></div>
<div style="left:874.50px;top:543.00px;width:3.00px;height:7.00px;background:#555"></div>
<div style="left:908.50px;top:546.30px;width:4.50px;height:0.90px;background:#888"></div>
<div style="left:910.30px;top:544.50px;width:0.90px;height:4.50px;background:#888"></div>
<div class="t" style="left:919.05px;top:540.80px;font-size:8.5px;line-height:12px;color:#444;font-weight:normal;font-family:'Liberation Sans',sans-serif;transform-origin:0 0;transform:scaleX(0.9500);">100%</div>
<div style="left:80.00px;top:553.00px;width:864.00px;height:23.00px;background:linear-gradient(90deg,#1f2e36,#1e2d3a 50%,#1b2b42)"></div>
<div style="left:80.00px;top:553.00px;width:27.80px;height:23.00px;background:#1b3b4a"></div>
<svg style="position:absolute;left:89.00px;top:560.00px;" width="10" height="10" viewBox="0 0 10 10"><path d="M0 1.2 L4.3 0.6 V4.6 H0Z M5 0.5 L10 -0.2 V4.6 H5Z M0 5.3 H4.3 V9.3 L0 8.7Z M5 5.3 H10 V10 L5 9.4Z" fill="#fff"/></svg>
<div style="left:108.00px;top:553.00px;width:197.00px;height:23.00px;background:#f2f2f2"></div>
<svg style="position:absolute;left:113.00px;top:559.00px;" width="11" height="11" viewBox="0 0 11 11"><circle cx="6.5" cy="4.5" r="3.4" fill="none" stroke="#444" stroke-width="1"/><path d="M4 7 L0.8 10.2" stroke="#444" stroke-width="1.2"/></svg>
<div class="t" style="left:129.57px;top:559.00px;font-size:8.5px;line-height:12px;color:#555;font-weight:normal;font-family:'Liberation Sans',sans-serif;transform-origin:0 0;transform:scaleX(0.8304);">ここに入力して検索</div>
<svg style="position:absolute;left:314.00px;top:560.00px;" width="10" height="10" viewBox="0 0 10 10"><circle cx="5" cy="5" r="3.8" fill="none" stroke="#fff" stroke-width="1.3"/></svg>
<svg style="position:absolute;left:341.00px;top:560.00px;" width="11" height="10" viewBox="0 0 11 10"><rect x="2.5" y="1.5" width="6" height="7" fill="none" stroke="#ddd" stroke-width="1"/><path d="M0.5 0.5 V9.5 M10.5 0.5 V9.5" stroke="#ddd" stroke-width="0.8"/></svg>
<svg style="position:absolute;left:368.00px;top:559.00px;" width="14" height="12" viewBox="0 0 14 12"><rect x="0" y="1" width="6" height="3" fill="#e8a82a"/><rect x="0" y="3" width="14" height="9" fill="#f5c542"/><rect x="2" y="6" width="10" height="4" fill="#3b82c4"/></svg>
<svg style="position:absolute;left:394.00px;top:558.00px;" width="14" height="13" viewBox="0 0 14 13"><rect x="0" y="0" width="14" height="13" fill="#1e5aa8"/><path d="M0 13 L5 6 L9 10 L11 8 L14 11 V13Z" fill="#7fb8ec"/><circle cx="10" cy="4" r="1.6" fill="#bfe0ff"/></svg>
<svg style="position:absolute;left:420.00px;top:557.50px;" width="14" height="14" viewBox="0 0 14 14"><path d="M4 4 A3 3 0 0 1 10 4" fill="none" stroke="#eee" stroke-width="1.2"/><rect x="1" y="4" width="12" height="10" fill="#f5f5f5"/><rect x="4.3" y="6.5" width="2.5" height="2.5" fill="#f25022"/><rect x="7.2" y="6.5" width="2.5" height="2.5" fill="#7fba00"/><rect x="4.3" y="9.4" width="2.5" height="2.5" fill="#00a4ef"/><rect x="7.2" y="9.4" width="2.5" height="2.5" fill="#ffb900"/></svg>
<svg style="position:absolute;left:446.00px;top:558.00px;" width="14" height="14" viewBox="0 0 14 14"><circle cx="7" cy="7" r="6.5" fill="#1a8ad4"/><path d="M2 8 Q3 3 8 3 Q12 3 12.5 7 Q10 5.5 7 7 Q5 9 8 11 Q10 12 13 10 Q11 14 6 13.5 Q1.5 12 2 8Z" fill="#3fd08a"/><path d="M5 8 Q6 6 9 6.5 Q7 7.5 8 9.5 Q5 10 5 8Z" fill="#0c5e9c"/></svg>
<svg style="position:absolute;left:472.00px;top:558.00px;" width="14" height="13" viewBox="0 0 14 13"><path d="M3 1 L13 0 L11 12 L1 13Z" fill="#c9dcef"/><path d="M3 1 L5 0.5 L3 12.8 L1 13Z" fill="#8fb3d5"/></svg>
<svg style="position:absolute;left:497.00px;top:558.00px;" width="14" height="14" viewBox="0 0 14 14"><circle cx="7" cy="7" r="6.5" fill="#ffe500"/></svg>
<div style="left:495.00px;top:574.50px;width:20.00px;height:1.50px;background:#8ec3ee"></div>
<svg style="position:absolute;left:525.00px;top:558.00px;" width="14" height="14" viewBox="0 0 14 14"><path d="M7 0.5 L8.7 5 L13.5 5.2 L9.7 8.2 L11 13 L7 10.2 L3 13 L4.3 8.2 L0.5 5.2 L5.3 5Z" fill="#4d7fd0"/><path d="M7 6 L7 13 L9 11 L11 14 L12 13.5 L10.5 10.5 L13 10.3Z" fill="#fff"/></svg>
<svg style="position:absolute;left:549.00px;top:559.00px;" width="15" height="11" viewBox="0 0 15 11"><rect x="0" y="0" width="15" height="11" fill="#1f7fd8"/><path d="M0 0 L7.5 6 L15 0" fill="none" stroke="#9fd0ff" stroke-width="1.2"/></svg>
<div style="left:575.50px;top:557.50px;width:13.50px;height:14.00px;background:#2a3640"></div>
<svg style="position:absolute;left:577.00px;top:559.00px;" width="11" height="11" viewBox="0 0 11 11"><path d="M2 3 L6 1 L8 4 L4 6Z" fill="#eee"/><path d="M3 7 L7 5 L9.5 8 L5 10.5Z" fill="#3fe0c8"/></svg>
<div style="left:572.00px;top:574.50px;width:20.00px;height:1.50px;background:#8ec3ee"></div>
<div style="left:595.60px;top:553.00px;width:24.40px;height:23.00px;background:#3a4955"></div>
<svg style="position:absolute;left:600.00px;top:558.00px;" width="15" height="13" viewBox="0 0 15 13"><rect x="4" y="0" width="11" height="13" fill="#21a366"/><rect x="4" y="0" width="11" height="4.3" fill="#33c481"/><rect x="4" y="8.7" width="11" height="4.3" fill="#107c41"/><rect x="0" y="2.5" width="8" height="8" fill="#185c37"/><path d="M2 4.3 L6 8.7 M6 4.3 L2 8.7" stroke="#fff" stroke-width="1"/></svg>
<div style="left:596.00px;top:574.50px;width:24.00px;height:1.50px;background:#8ec3ee"></div>
<svg style="position:absolute;left:626.00px;top:558.00px;" width="15" height="14" viewBox="0 0 15 14"><rect x="0" y="1" width="10" height="9" rx="1.5" fill="#3aa0d8"/><path d="M10 4 L14 2 V9 L10 7Z" fill="#3aa0d8"/><circle cx="5" cy="5.5" r="2.4" fill="#fff"/><circle cx="5" cy="5.5" r="1.6" fill="#e02020"/><path d="M5 10 V12.5 M2.5 13 H7.5" stroke="#3aa0d8" stroke-width="0.9"/></svg>
<div style="left:623.50px;top:574.50px;width:20.50px;height:1.50px;background:#8ec3ee"></div>
<svg style="position:absolute;left:660.00px;top:558.00px;" width="15" height="12" viewBox="0 0 15 12"><circle cx="5" cy="5" r="3.5" fill="#f5c542"/><path d="M3 11 Q0 11 0.5 8 Q1 6 3.5 6.5 Q4.5 3.5 8 4 Q11 4.5 11 7 Q14.5 7 14.5 9 Q14.5 11 12 11Z" fill="#dce8f5"/></svg>
<div class="t" style="left:680.00px;top:559.00px;font-size:8.3px;line-height:12px;color:#eee;font-weight:normal;font-family:'Liberation Sans',sans-serif;transform-origin:0 0;transform:scaleX(0.8889);">25°C</div>
<svg style="position:absolute;left:708.00px;top:560.60px;" width="8" height="6" viewBox="0 0 8 6"><path d="M0.8 5 L4 1.6 L7.2 5" fill="none" stroke="#ddd" stroke-width="1"/></svg>
<svg style="position:absolute;left:820.50px;top:559.00px;" width="10" height="11" viewBox="0 0 10 11"><path d="M2 9 L8 3 M3.5 4.5 A2 2 0 0 1 6.5 2 M4 9.5 A2 2 0 0 1 2 6.5" fill="none" stroke="#ddd" stroke-width="1"/></svg>
<div class="t" style="left:837.58px;top:558.50px;font-size:10px;line-height:14px;color:#eee;font-weight:normal;font-family:'Liberation Serif',serif;transform-origin:0 0;transform:scaleX(0.9167);">A</div>
<svg style="position:absolute;left:853.00px;top:559.00px;" width="11" height="11" viewBox="0 0 11 11"><circle cx="5" cy="5" r="4.6" fill="#1f78d8"/><circle cx="8.3" cy="8" r="2.2" fill="#e8703a"/></svg>
<div class="t" style="left:884.00px;top:553.80px;font-size:8px;line-height:11px;color:#e8e8e8;font-weight:normal;font-family:'Liberation Sans',sans-serif;transform-origin:0 0;transform:scaleX(0.9067);">8:24</div>
<div class="t" style="left:873.00px;top:564.10px;font-size:8px;line-height:11px;color:#e8e8e8;font-weight:normal;font-family:'Liberation Sans',sans-serif;transform-origin:0 0;transform:scaleX(0.9231);">2021/07/11</div>
<svg style="position:absolute;left:920.00px;top:559.80px;" width="10" height="10" viewBox="0 0 10 10"><path d="M0 0 H9.8 V7 H4.6 L3 9.2 V7 H0Z" fill="#f4f4f4"/><path d="M2 2 H7.8 M2 3.8 H7.8 M2 5.5 H5.5" stroke="#8a8f98" stroke-width="0.8"/><circle cx="8" cy="7.6" r="1.6" fill="#1c2b42" stroke="#ddd" stroke-width="0.6"/></svg>
<div style="left:940.50px;top:553.00px;width:0.80px;height:23.00px;background:#556"></div>
<div style="left:766.00px;top:561.00px;width:8.00px;height:7.00px;background:rgba(230,230,230,.6)"></div>
<div style="left:785.00px;top:563.00px;width:5.00px;height:5.00px;background:#d83030;border-radius:50%"></div>
<div style="left:803.00px;top:561.00px;width:7.00px;height:7.00px;border:1px solid rgba(200,200,200,.6)"></div>
<div class="t" style="left:726.00px;top:553.40px;font-size:14px;line-height:20px;color:rgba(236,240,244,.82);font-weight:normal;font-family:'Liberation Sans',sans-serif;transform-origin:0 0;transform:scaleX(1.0244);">© 2024 saym</div>
<div style="left:318.30px;top:13.00px;width:39.20px;height:26.40px;border:5.5px solid #ff0000"></div>
<div style="left:478.80px;top:33.00px;width:50.20px;height:53.60px;border:5.3px solid #ff0000"></div>
<svg style="position:absolute;left:0;top:0" width="1024" height="100" viewBox="0 0 1024 100"><line x1="355" y1="28.9" x2="481" y2="58.8" stroke="#ff0000" stroke-width="4.4"/></svg>
<div style="left:503px;top:50.7px;width:14.6px;height:14.6px;border-radius:50%;background:rgba(235,110,95,.85)"></div>
<svg style="position:absolute;left:509.00px;top:57.50px;" width="9" height="12" viewBox="0 0 9 12"><path d="M1 1 V9.5 L3.2 7.6 L4.9 11 L6.3 10.4 L4.6 7 H7.6Z" fill="#fff" stroke="#222" stroke-width="0.8"/></svg>
</body></html>
